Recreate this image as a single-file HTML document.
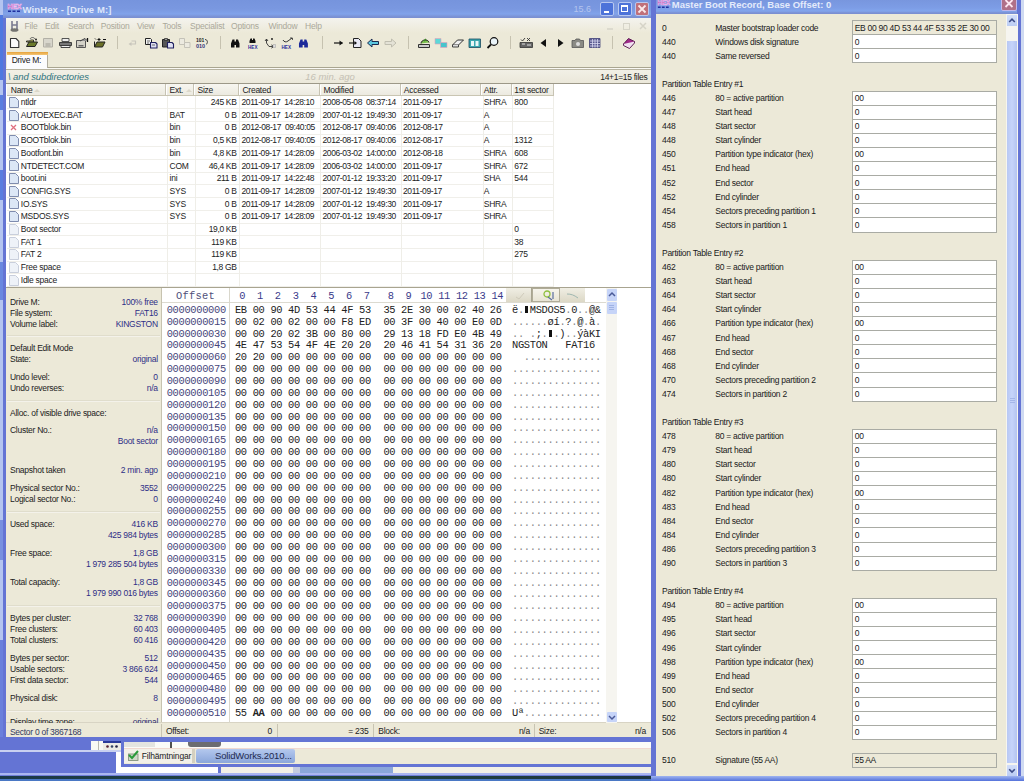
<!DOCTYPE html><html><head><meta charset="utf-8"><style>
html,body{margin:0;padding:0;}
body{width:1024px;height:781px;overflow:hidden;position:relative;background:#6a7fd6;font-family:"Liberation Sans",sans-serif;}
.t{position:absolute;white-space:pre;letter-spacing:-0.27px;}
.r{position:absolute;}
svg{position:absolute;overflow:visible;}
</style></head><body>
<div class="r" style="left:0px;top:0px;width:3px;height:741px;background:#b4c4f0;"></div>
<div class="r" style="left:0px;top:15px;width:3px;height:65px;background:#4f78e0;"></div>
<div class="r" style="left:0px;top:95px;width:3px;height:15px;background:#5a7ee0;"></div>
<div class="r" style="left:0px;top:170px;width:3px;height:30px;background:#5a7ee0;"></div>
<div class="r" style="left:0px;top:262px;width:3px;height:38px;background:#6a88e0;"></div>
<div class="r" style="left:0px;top:520px;width:3px;height:40px;background:#7890e0;"></div>
<div class="r" style="left:0px;top:640px;width:3px;height:101px;background:#6a80dc;"></div>
<div class="r" style="left:3px;top:0px;width:653px;height:741px;background:#6474d4;"></div>
<div class="r" style="left:3px;top:0px;width:648px;height:18px;background:linear-gradient(#7694dd 0px,#7a98e0 9px,#81a3ea 14px,#7a90d2 17px,#7a90d2 18px);"></div>
<div class="r" style="left:6px;top:18px;width:645px;height:15px;background:linear-gradient(#f4f3ee,#ece9d8);"></div>
<div class="r" style="left:6px;top:33px;width:645px;height:18px;background:#ece9d8;"></div>
<div class="r" style="left:48px;top:51px;width:603px;height:1px;background:#c2beaa;"></div>
<div class="r" style="left:6px;top:51px;width:645px;height:19px;background:#ece9d8;"></div>
<div class="r" style="left:48px;top:67px;width:603px;height:1px;background:#a9a590;"></div>
<div class="r" style="left:6px;top:68px;width:645px;height:1px;background:#faf9f4;"></div>
<div class="r" style="left:6px;top:69px;width:645px;height:1px;background:#b7b3a0;"></div>
<div class="r" style="left:7px;top:52px;width:41px;height:17px;background:#fcfcfe;"></div>
<div class="r" style="left:7px;top:52px;width:41px;height:3px;background:linear-gradient(#e6a23a,#f3c576);"></div>
<div class="r" style="left:47px;top:55px;width:1px;height:13px;background:#b0aca0;"></div>
<div class="r" style="left:6px;top:70px;width:645px;height:13px;background:linear-gradient(#f2f0e6,#ebe8da);"></div>
<div class="r" style="left:6px;top:83px;width:645px;height:1px;background:#9c9888;"></div>
<div class="r" style="left:6px;top:84px;width:645px;height:203px;background:#ffffff;"></div>
<div class="r" style="left:6px;top:287px;width:645px;height:1px;background:#a8a490;"></div>
<div class="r" style="left:7px;top:84px;width:547px;height:12px;background:linear-gradient(#f7f6f0,#ebe9df);"></div>
<div class="r" style="left:7px;top:95px;width:547px;height:1px;background:#c9c5b2;"></div>
<div class="r" style="left:6px;top:288px;width:156px;height:435px;background:#ece9d8;"></div>
<div class="r" style="left:161px;top:288px;width:1px;height:435px;background:#c7c3b0;"></div>
<div class="r" style="left:162px;top:288px;width:489px;height:435px;background:#ffffff;"></div>
<div class="r" style="left:6px;top:723px;width:645px;height:14px;background:#ece9d8;"></div>
<div class="r" style="left:6px;top:722px;width:645px;height:1px;background:#d8d4c4;"></div>
<svg style="left:6.8px;top:1.8px" width="14.0" height="11.0" viewBox="0 0 14 11"><text x="0.3" y="6.8" font-family="Liberation Sans" font-weight="bold" font-size="7.2" fill="#b02898" stroke="#f0c0f0" stroke-width="0.6" letter-spacing="-0.3">HEX</text><path d="M1 9.2h3M5.5 9.2h3M10 9.2h3" stroke="#2030a0" stroke-width="1.6"/></svg>
<div class="t" style="top:4.41px;font-size:9.5px;line-height:12px;color:#dfe7fa;letter-spacing:0.1px;font-weight:bold;left:22.60px;">WinHex - [Drive M:]</div>
<div class="t" style="top:3.38px;font-size:9px;line-height:12px;color:#b4c4ee;letter-spacing:0px;right:433.00px;text-align:right;">15.6</div>
<div class="r" style="left:600px;top:2px;width:14px;height:14px;box-sizing:border-box;border:1px solid #b8c8f0;border-radius:2px;background:#4d73d9;"></div>
<div class="r" style="left:617.5px;top:2px;width:14px;height:14px;box-sizing:border-box;border:1px solid #b8c8f0;border-radius:2px;background:#4d73d9;"></div>
<div class="r" style="left:635px;top:2px;width:14px;height:14px;box-sizing:border-box;border:1px solid #b8c8f0;border-radius:2px;background:#c0707a;"></div>
<div class="r" style="left:604px;top:11px;width:5px;height:2px;background:#ffffff;"></div>
<div class="r" style="left:621px;top:5px;width:7px;height:7px;box-sizing:border-box;border:1px solid #fff;border-top-width:2px;"></div>
<svg style="left:635px;top:2px" width="14" height="14"><path d="M3.5 3.5L10.5 10.5M10.5 3.5L3.5 10.5" stroke="#fbe8ea" stroke-width="1.8"/></svg>
<div class="t" style="top:20.05px;font-size:8.5px;line-height:12px;color:#aaa89a;letter-spacing:-0.2px;left:24.60px;">File</div>
<div class="t" style="top:20.05px;font-size:8.5px;line-height:12px;color:#aaa89a;letter-spacing:-0.2px;left:45.00px;">Edit</div>
<div class="t" style="top:20.05px;font-size:8.5px;line-height:12px;color:#aaa89a;letter-spacing:-0.2px;left:68.00px;">Search</div>
<div class="t" style="top:20.05px;font-size:8.5px;line-height:12px;color:#aaa89a;letter-spacing:-0.2px;left:100.80px;">Position</div>
<div class="t" style="top:20.05px;font-size:8.5px;line-height:12px;color:#aaa89a;letter-spacing:-0.2px;left:137.00px;">View</div>
<div class="t" style="top:20.05px;font-size:8.5px;line-height:12px;color:#aaa89a;letter-spacing:-0.2px;left:162.50px;">Tools</div>
<div class="t" style="top:20.05px;font-size:8.5px;line-height:12px;color:#aaa89a;letter-spacing:-0.2px;left:190.00px;">Specialist</div>
<div class="t" style="top:20.05px;font-size:8.5px;line-height:12px;color:#aaa89a;letter-spacing:-0.2px;left:231.00px;">Options</div>
<div class="t" style="top:20.05px;font-size:8.5px;line-height:12px;color:#aaa89a;letter-spacing:-0.2px;left:268.50px;">Window</div>
<div class="t" style="top:20.05px;font-size:8.5px;line-height:12px;color:#aaa89a;letter-spacing:-0.2px;left:305.00px;">Help</div>
<svg style="left:605px;top:20px" width="50" height="12"><path d="M2 9h6" stroke="#d6d4c8" stroke-width="1.5"/><rect x="18.5" y="3.5" width="6" height="6" fill="none" stroke="#d6d4c8"/><path d="M35 3l6 6M41 3l-6 6" stroke="#d6d4c8" stroke-width="1.5"/></svg>
<svg style="left:0px;top:0px" width="660" height="60" viewBox="0 0 660 60">
<g stroke-linejoin="round">
<!-- menu H icon -->
<path d="M12 21v8M17 21v8M12 25h5" stroke="#7a7a90" stroke-width="1.6"/>
<ellipse cx="14.5" cy="30" rx="4" ry="1.8" fill="#555" opacity="0.8"/>
<!-- 1 new -->
<path d="M10.5 38.5h5.5l2.8 2.8v6.2h-8.3z" fill="#fbfbfb" stroke="#333" stroke-width="1.1"/>
<!-- 2 open -->
<path d="M26.5 41h3l1 -1h3v2h-7z" fill="#d8d870" stroke="#222" stroke-width="0.9"/>
<path d="M26.5 46.5l2.5-4.5h8.5l-2.5 4.5z" fill="#6b7a2a" stroke="#222" stroke-width="1"/>
<path d="M30 39c1-2 4-2 5 0" stroke="#444" fill="none" stroke-width="0.8"/><circle cx="36" cy="39.5" r="0.9" fill="#111"/>
<!-- 3 save gray -->
<rect x="43.5" y="38.5" width="9" height="8.5" fill="#d8d6cc" stroke="#b2b0a6" stroke-width="1"/>
<rect x="45.5" y="43" width="5" height="4" fill="#bcbab0"/>
<!-- 4 print -->
<rect x="62" y="38.5" width="7" height="3" fill="#eee" stroke="#444" stroke-width="0.9"/>
<path d="M59.5 42.5h12v3h-12z" fill="#777" stroke="#333" stroke-width="0.9"/>
<rect x="61" y="45.5" width="9" height="2" fill="#eee" stroke="#333" stroke-width="0.9"/>
<!-- 5 -->
<rect x="76.5" y="40.5" width="9" height="7" fill="#d4d2c8" stroke="#555" stroke-width="1"/>
<path d="M80 41l5 -2.5l2 2" stroke="#333" fill="#aaa" stroke-width="0.9"/><path d="M87.5 38v4" stroke="#111" stroke-width="1.3"/>
<rect x="78.5" y="45" width="5" height="1.5" fill="#666"/>
<!-- 6 folder star -->
<path d="M94.5 47l2.5-5h8l-2.5 5z" fill="#6b7028" stroke="#222" stroke-width="1"/>
<path d="M94.5 41.5v5.5" stroke="#222" stroke-width="1"/>
<path d="M95 38.5l1 1M99 38v3M97.5 39.5h3M103 39.5h3" stroke="#111" stroke-width="1"/>
<!-- sep -->
<path d="M117.5 36v13" stroke="#c6c2b0" stroke-width="1"/>
<!-- 7 undo gray -->
<path d="M130 44h5.5v-3h-4" stroke="#c8c6bc" fill="none" stroke-width="1.2"/><path d="M128.5 44l3-2v4z" fill="#c8c6bc"/>
<!-- 8 copy -->
<path d="M145.5 38.5h5l1 1v5h-6z" fill="#f2f2f2" stroke="#222" stroke-width="1"/>
<path d="M150.5 42.5h5l1.5 1.5v4h-6.5z" fill="#dfe0f2" stroke="#202060" stroke-width="1.1"/>
<path d="M147 41h3M147 43h2M152 45h3" stroke="#333" stroke-width="0.7"/>
<!-- 9 paste -->
<rect x="162.5" y="39.5" width="7" height="7.5" fill="#555" stroke="#222" stroke-width="1"/>
<rect x="164.5" y="38.5" width="3" height="2" fill="#999" stroke="#222" stroke-width="0.7"/>
<path d="M167.5 42.5h4.5l1.5 1.5v4h-6z" fill="#dfe0f2" stroke="#202060" stroke-width="1.1"/>
<!-- 10 gray copy -->
<path d="M179.5 38.5h5v6h-5z" fill="#eceae0" stroke="#c4c2b8" stroke-width="1"/>
<path d="M184.5 42.5h5.5v5h-5.5z" fill="#eceae0" stroke="#c4c2b8" stroke-width="1"/>
<!-- 11 101/010 -->
<text x="196" y="42" font-family="Liberation Sans" font-size="5" font-weight="bold" fill="#222">101</text>
<text x="196" y="48" font-family="Liberation Sans" font-size="5.5" font-weight="bold" fill="#33337a">010</text>
<path d="M205 39.5c3 0 3 4 1 5" stroke="#333" fill="none" stroke-width="0.9"/>
<!-- sep -->
<path d="M220.5 36v13" stroke="#c6c2b0" stroke-width="1"/>
<!-- 12 binoculars black -->
<path d="M231 47.5v-4l1.5-4h2v2h1.5v-2h2l1.5 4v4h-3.5v-2.5h-1.5v2.5z" fill="#111"/>
<!-- 13 binoc HEX -->
<path d="M249.5 43v-2l1-2.5h1.5v1.5h1v-1.5h1.5l1 2.5v2z" fill="#111"/>
<text x="248" y="48.5" font-family="Liberation Sans" font-size="4.6" font-weight="bold" fill="#2a2a9a">HEX</text>
<!-- 14 replace -->
<path d="M265 41l1.5-2l1.5 2M266.5 39v4l2.5 3.5h4" stroke="#333" fill="none" stroke-width="0.9"/>
<circle cx="272" cy="39" r="0.9" fill="#111"/><path d="M271.5 45l2 1.5-2 1.5" stroke="#111" fill="none" stroke-width="1"/>
<rect x="273" y="44.5" width="2.5" height="3" fill="#ddd" stroke="#aaa" stroke-width="0.6"/>
<!-- 15 replace HEX -->
<path d="M283 40c1 2 3 2.5 5 1M288 41l4-3" stroke="#333" fill="none" stroke-width="1"/>
<path d="M290 38l2.5 0v2" stroke="#333" fill="none" stroke-width="0.8"/>
<text x="281.5" y="48.5" font-family="Liberation Sans" font-size="4.6" font-weight="bold" fill="#2a2a9a">HEX</text>
<!-- 16 blue binoculars -->
<path d="M299 47.5v-4l1.5-4h2v2h1.5v-2h2l1.5 4v4h-3.5v-2.5h-1.5v2.5z" fill="#1c2a9a" transform="translate(299.5 0) scale(1.05 1) translate(-299.5 0)"/>
<!-- sep -->
<path d="M322.5 36v13" stroke="#c6c2b0" stroke-width="1"/>
<!-- 17 arrow -->
<path d="M334 43h8.5" stroke="#111" stroke-width="1.2"/><path d="M339.5 40.5l3.5 2.5-3.5 2.5z" fill="#111"/>
<!-- 18 arrow into doc -->
<path d="M353.5 38.5h5l2.5 2.5v6.5h-7.5z" fill="#e8e8f4" stroke="#222" stroke-width="1"/>
<path d="M349 43h7" stroke="#111" stroke-width="1.1"/><path d="M354.5 41l2.5 2-2.5 2z" fill="#111"/>
<!-- 19 cyan back -->
<path d="M367.5 43l4.5-4v2.5h6.5v3h-6.5v2.5z" fill="#5cc8e0" stroke="#1a2a50" stroke-width="1"/>
<!-- 20 gray fwd -->
<path d="M396 43l-4.5-4v2.5h-6.5v3h6.5v2.5z" fill="#e4e2d6" stroke="#c0beb0" stroke-width="1"/>
<!-- sep -->
<path d="M408.5 36v13" stroke="#c6c2b0" stroke-width="1"/>
<!-- 21 disk green -->
<path d="M418.5 44.5h11v3h-11z" fill="#ccc" stroke="#333" stroke-width="1"/>
<path d="M421 43.5c0-4 7-5 8-1" stroke="#222" fill="#7cc050" stroke-width="1"/>
<path d="M424 41l2-2" stroke="#3a8a20" stroke-width="1.3"/>
<!-- 22 cyan squares -->
<rect x="435" y="38.5" width="6" height="5.5" fill="#5cd8d8" stroke="#e8a0b8" stroke-width="0.6"/>
<rect x="440.5" y="42.5" width="6.5" height="5" fill="#46c4cc" stroke="#e8a0b8" stroke-width="0.6"/>
<!-- 23 tape -->
<path d="M452.5 45l5-5h6l-5 5z" fill="#f0f0f0" stroke="#333" stroke-width="1"/><path d="M452.5 45v2h6v-2" fill="#ddd" stroke="#333" stroke-width="0.9"/>
<!-- 24 teal calc -->
<rect x="469" y="39" width="11.5" height="8.5" fill="#3aa8b0" stroke="#1a4a60" stroke-width="0.8"/>
<rect x="471" y="41" width="3" height="5" fill="#e8f8f8"/><rect x="475.5" y="41" width="3" height="5" fill="#e8f8f8"/>
<!-- 25 magnifier -->
<circle cx="494" cy="41.5" r="3.8" fill="#eaf4f8" stroke="#111" stroke-width="1.2"/><path d="M491 44.5l-3.5 3.5" stroke="#111" stroke-width="1.8"/>
<!-- sep -->
<path d="M510.5 36v13" stroke="#c6c2b0" stroke-width="1"/>
<!-- 26 check/x table -->
<path d="M521 39.5l1.5 1.5 2.5-3M527 38l3 3M530 38l-3 3" stroke="#333" fill="none" stroke-width="0.9"/>
<rect x="520" y="42.5" width="12.5" height="5" fill="#666" stroke="#333" stroke-width="0.8"/><path d="M522 44h3M527 45h4" stroke="#eee" stroke-width="0.9"/>
<!-- 27/28 triangles -->
<path d="M546 39v8l-5.5-4z" fill="#111"/>
<path d="M558 39v8l5.5-4z" fill="#111"/>
<!-- 29 camera -->
<path d="M572 40.5h3l1-1.5h3.5l1 1.5h3v7h-11.5z" fill="#8a8a84" stroke="#555" stroke-width="0.8"/>
<circle cx="578" cy="44" r="2" fill="#ddd"/>
<!-- 30 grid -->
<rect x="589.5" y="38.5" width="10.5" height="9" fill="#5a5a90" stroke="#44447a" stroke-width="0.8"/>
<path d="M592.5 39v8.5M595 39v8.5M597.5 39v8.5M590 41h10M590 43.5h10M590 46h10" stroke="#d8d8f0" stroke-width="0.8"/>
<!-- sep -->
<path d="M612.5 36v13" stroke="#c6c2b0" stroke-width="1"/>
<!-- 31 book -->
<path d="M623.5 44l5-5.5 6 3-5 5.5z" fill="#a02a8a" stroke="#501048" stroke-width="0.9"/>
<path d="M623.5 44v1.5l6 3 5-5.5v-1.5" fill="#f0e0f0" stroke="#501048" stroke-width="0.9"/>
</g>
</svg>
<div class="t" style="top:54.35px;font-size:8.5px;line-height:12px;color:#222;left:11.70px;">Drive M:</div>
<div class="t" style="top:71.11px;font-size:9.5px;line-height:12px;color:#2f7480;letter-spacing:-0.1px;font-style:italic;left:8.00px;">\ and subdirectories</div>
<div class="t" style="top:71.11px;font-size:9.5px;line-height:12px;color:#c4c0b4;letter-spacing:0px;font-style:italic;left:305.20px;">16 min. ago</div>
<div class="t" style="top:70.75px;font-size:8.5px;line-height:12px;color:#222;letter-spacing:-0.3px;right:376.60px;text-align:right;">14+1=15 files</div>
<div class="r" style="left:165px;top:84px;width:1px;height:12px;background:#c7c3b3;"></div>
<div class="r" style="left:166px;top:85px;width:1px;height:10px;background:#ffffff;"></div>
<div class="r" style="left:193px;top:84px;width:1px;height:12px;background:#c7c3b3;"></div>
<div class="r" style="left:194px;top:85px;width:1px;height:10px;background:#ffffff;"></div>
<div class="r" style="left:238px;top:84px;width:1px;height:12px;background:#c7c3b3;"></div>
<div class="r" style="left:239px;top:85px;width:1px;height:10px;background:#ffffff;"></div>
<div class="r" style="left:319px;top:84px;width:1px;height:12px;background:#c7c3b3;"></div>
<div class="r" style="left:320px;top:85px;width:1px;height:10px;background:#ffffff;"></div>
<div class="r" style="left:400px;top:84px;width:1px;height:12px;background:#c7c3b3;"></div>
<div class="r" style="left:401px;top:85px;width:1px;height:10px;background:#ffffff;"></div>
<div class="r" style="left:480px;top:84px;width:1px;height:12px;background:#c7c3b3;"></div>
<div class="r" style="left:481px;top:85px;width:1px;height:10px;background:#ffffff;"></div>
<div class="r" style="left:511px;top:84px;width:1px;height:12px;background:#c7c3b3;"></div>
<div class="r" style="left:512px;top:85px;width:1px;height:10px;background:#ffffff;"></div>
<div class="r" style="left:553px;top:84px;width:1px;height:12px;background:#c7c3b3;"></div>
<div class="r" style="left:554px;top:85px;width:1px;height:10px;background:#ffffff;"></div>
<div class="t" style="top:84.35px;font-size:8.5px;line-height:12px;color:#222;left:10.80px;">Name</div>
<div class="t" style="top:84.35px;font-size:8.5px;line-height:12px;color:#222;left:169.60px;">Ext.</div>
<div class="t" style="top:84.35px;font-size:8.5px;line-height:12px;color:#222;left:197.60px;">Size</div>
<div class="t" style="top:84.35px;font-size:8.5px;line-height:12px;color:#222;left:242.50px;">Created</div>
<div class="t" style="top:84.35px;font-size:8.5px;line-height:12px;color:#222;left:323.40px;">Modified</div>
<div class="t" style="top:84.35px;font-size:8.5px;line-height:12px;color:#222;left:403.80px;">Accessed</div>
<div class="t" style="top:84.35px;font-size:8.5px;line-height:12px;color:#222;left:483.80px;">Attr.</div>
<div class="t" style="top:84.35px;font-size:8.5px;line-height:12px;color:#222;left:514.30px;">1st sector</div>
<svg style="left:34px;top:89px" width="6" height="4"><path d="M0 3L3 0L6 3" fill="#dcd8ca"/></svg>
<svg style="left:186px;top:89px" width="6" height="4"><path d="M0 3L3 0L6 3" fill="#dcd8ca"/></svg>
<div class="r" style="left:7px;top:108px;width:547px;height:1px;background:#f0efea;"></div>
<div class="r" style="left:7px;top:121px;width:547px;height:1px;background:#f0efea;"></div>
<div class="r" style="left:7px;top:134px;width:547px;height:1px;background:#f0efea;"></div>
<div class="r" style="left:7px;top:146px;width:547px;height:1px;background:#f0efea;"></div>
<div class="r" style="left:7px;top:159px;width:547px;height:1px;background:#f0efea;"></div>
<div class="r" style="left:7px;top:172px;width:547px;height:1px;background:#f0efea;"></div>
<div class="r" style="left:7px;top:184px;width:547px;height:1px;background:#f0efea;"></div>
<div class="r" style="left:7px;top:197px;width:547px;height:1px;background:#f0efea;"></div>
<div class="r" style="left:7px;top:210px;width:547px;height:1px;background:#f0efea;"></div>
<div class="r" style="left:7px;top:223px;width:547px;height:1px;background:#f0efea;"></div>
<div class="r" style="left:7px;top:235px;width:547px;height:1px;background:#f0efea;"></div>
<div class="r" style="left:7px;top:248px;width:547px;height:1px;background:#f0efea;"></div>
<div class="r" style="left:7px;top:261px;width:547px;height:1px;background:#f0efea;"></div>
<div class="r" style="left:7px;top:273px;width:547px;height:1px;background:#f0efea;"></div>
<div class="r" style="left:7px;top:286px;width:547px;height:1px;background:#f0efea;"></div>
<div class="r" style="left:167px;top:96px;width:1px;height:191px;background:#efeee8;"></div>
<div class="r" style="left:195px;top:96px;width:1px;height:191px;background:#efeee8;"></div>
<div class="r" style="left:239px;top:96px;width:1px;height:191px;background:#efeee8;"></div>
<div class="r" style="left:320px;top:96px;width:1px;height:191px;background:#efeee8;"></div>
<div class="r" style="left:401px;top:96px;width:1px;height:191px;background:#efeee8;"></div>
<div class="r" style="left:483px;top:96px;width:1px;height:191px;background:#efeee8;"></div>
<div class="r" style="left:512px;top:96px;width:1px;height:191px;background:#efeee8;"></div>
<div class="r" style="left:553px;top:96px;width:1px;height:191px;background:#efeee8;"></div>
<svg style="left:8.5px;top:96.8px" width="10" height="11"><path d="M0.5 0.5H6.5L9.5 3.5V10.5H0.5Z" fill="#dce7f6" stroke="#7f8cae"/></svg>
<div class="t" style="top:96.05px;font-size:8.5px;line-height:12px;color:#222;left:20.80px;">ntldr</div>
<div class="t" style="top:96.05px;font-size:8.5px;line-height:12px;color:#222;left:169.60px;"></div>
<div class="t" style="top:96.05px;font-size:8.5px;line-height:12px;color:#222;letter-spacing:-0.35px;right:787.50px;text-align:right;">245 KB</div>
<div class="t" style="top:96.05px;font-size:8.5px;line-height:12px;color:#222;letter-spacing:-0.4px;left:241.50px;">2011-09-17  14:28:10</div>
<div class="t" style="top:96.05px;font-size:8.5px;line-height:12px;color:#222;letter-spacing:-0.4px;left:322.50px;">2008-05-08  08:37:14</div>
<div class="t" style="top:96.05px;font-size:8.5px;line-height:12px;color:#222;letter-spacing:-0.4px;left:403.00px;">2011-09-17</div>
<div class="t" style="top:96.05px;font-size:8.5px;line-height:12px;color:#222;left:483.80px;">SHRA</div>
<div class="t" style="top:96.05px;font-size:8.5px;line-height:12px;color:#222;left:514.30px;">800</div>
<svg style="left:8.5px;top:109.5px" width="10" height="11"><path d="M0.5 0.5H6.5L9.5 3.5V10.5H0.5Z" fill="#dce7f6" stroke="#7f8cae"/></svg>
<div class="t" style="top:108.75px;font-size:8.5px;line-height:12px;color:#222;left:20.80px;">AUTOEXEC.BAT</div>
<div class="t" style="top:108.75px;font-size:8.5px;line-height:12px;color:#222;left:169.60px;">BAT</div>
<div class="t" style="top:108.75px;font-size:8.5px;line-height:12px;color:#222;letter-spacing:-0.35px;right:787.50px;text-align:right;">0 B</div>
<div class="t" style="top:108.75px;font-size:8.5px;line-height:12px;color:#222;letter-spacing:-0.4px;left:241.50px;">2011-09-17  14:28:09</div>
<div class="t" style="top:108.75px;font-size:8.5px;line-height:12px;color:#222;letter-spacing:-0.4px;left:322.50px;">2007-01-12  19:49:30</div>
<div class="t" style="top:108.75px;font-size:8.5px;line-height:12px;color:#222;letter-spacing:-0.4px;left:403.00px;">2011-09-17</div>
<div class="t" style="top:108.75px;font-size:8.5px;line-height:12px;color:#222;left:483.80px;">A</div>
<div class="t" style="top:108.75px;font-size:8.5px;line-height:12px;color:#222;left:514.30px;"></div>
<svg style="left:8.5px;top:122.2px" width="10" height="11"><path d="M2 3l5 5M7 3l-5 5" stroke="#e07080" stroke-width="1.3"/></svg>
<div class="t" style="top:121.45px;font-size:8.5px;line-height:12px;color:#222;left:20.80px;">BOOTblok.bin</div>
<div class="t" style="top:121.45px;font-size:8.5px;line-height:12px;color:#222;left:169.60px;">bin</div>
<div class="t" style="top:121.45px;font-size:8.5px;line-height:12px;color:#222;letter-spacing:-0.35px;right:787.50px;text-align:right;">0 B</div>
<div class="t" style="top:121.45px;font-size:8.5px;line-height:12px;color:#222;letter-spacing:-0.4px;left:241.50px;">2012-08-17  09:40:05</div>
<div class="t" style="top:121.45px;font-size:8.5px;line-height:12px;color:#222;letter-spacing:-0.4px;left:322.50px;">2012-08-17  09:40:06</div>
<div class="t" style="top:121.45px;font-size:8.5px;line-height:12px;color:#222;letter-spacing:-0.4px;left:403.00px;">2012-08-17</div>
<div class="t" style="top:121.45px;font-size:8.5px;line-height:12px;color:#222;left:483.80px;">A</div>
<div class="t" style="top:121.45px;font-size:8.5px;line-height:12px;color:#222;left:514.30px;"></div>
<svg style="left:8.5px;top:134.9px" width="10" height="11"><path d="M0.5 0.5H6.5L9.5 3.5V10.5H0.5Z" fill="#dce7f6" stroke="#7f8cae"/></svg>
<div class="t" style="top:134.15px;font-size:8.5px;line-height:12px;color:#222;left:20.80px;">BOOTblok.bin</div>
<div class="t" style="top:134.15px;font-size:8.5px;line-height:12px;color:#222;left:169.60px;">bin</div>
<div class="t" style="top:134.15px;font-size:8.5px;line-height:12px;color:#222;letter-spacing:-0.35px;right:787.50px;text-align:right;">0,5 KB</div>
<div class="t" style="top:134.15px;font-size:8.5px;line-height:12px;color:#222;letter-spacing:-0.4px;left:241.50px;">2012-08-17  09:40:05</div>
<div class="t" style="top:134.15px;font-size:8.5px;line-height:12px;color:#222;letter-spacing:-0.4px;left:322.50px;">2012-08-17  09:40:06</div>
<div class="t" style="top:134.15px;font-size:8.5px;line-height:12px;color:#222;letter-spacing:-0.4px;left:403.00px;">2012-08-17</div>
<div class="t" style="top:134.15px;font-size:8.5px;line-height:12px;color:#222;left:483.80px;">A</div>
<div class="t" style="top:134.15px;font-size:8.5px;line-height:12px;color:#222;left:514.30px;">1312</div>
<svg style="left:8.5px;top:147.6px" width="10" height="11"><path d="M0.5 0.5H6.5L9.5 3.5V10.5H0.5Z" fill="#dce7f6" stroke="#7f8cae"/></svg>
<div class="t" style="top:146.85px;font-size:8.5px;line-height:12px;color:#222;left:20.80px;">Bootfont.bin</div>
<div class="t" style="top:146.85px;font-size:8.5px;line-height:12px;color:#222;left:169.60px;">bin</div>
<div class="t" style="top:146.85px;font-size:8.5px;line-height:12px;color:#222;letter-spacing:-0.35px;right:787.50px;text-align:right;">4,8 KB</div>
<div class="t" style="top:146.85px;font-size:8.5px;line-height:12px;color:#222;letter-spacing:-0.4px;left:241.50px;">2011-09-17  14:28:09</div>
<div class="t" style="top:146.85px;font-size:8.5px;line-height:12px;color:#222;letter-spacing:-0.4px;left:322.50px;">2006-03-02  14:00:00</div>
<div class="t" style="top:146.85px;font-size:8.5px;line-height:12px;color:#222;letter-spacing:-0.4px;left:403.00px;">2012-08-18</div>
<div class="t" style="top:146.85px;font-size:8.5px;line-height:12px;color:#222;left:483.80px;">SHRA</div>
<div class="t" style="top:146.85px;font-size:8.5px;line-height:12px;color:#222;left:514.30px;">608</div>
<svg style="left:8.5px;top:160.3px" width="10" height="11"><path d="M0.5 0.5H6.5L9.5 3.5V10.5H0.5Z" fill="#dce7f6" stroke="#7f8cae"/></svg>
<div class="t" style="top:159.55px;font-size:8.5px;line-height:12px;color:#222;left:20.80px;">NTDETECT.COM</div>
<div class="t" style="top:159.55px;font-size:8.5px;line-height:12px;color:#222;left:169.60px;">COM</div>
<div class="t" style="top:159.55px;font-size:8.5px;line-height:12px;color:#222;letter-spacing:-0.35px;right:787.50px;text-align:right;">46,4 KB</div>
<div class="t" style="top:159.55px;font-size:8.5px;line-height:12px;color:#222;letter-spacing:-0.4px;left:241.50px;">2011-09-17  14:28:09</div>
<div class="t" style="top:159.55px;font-size:8.5px;line-height:12px;color:#222;letter-spacing:-0.4px;left:322.50px;">2006-03-02  14:00:00</div>
<div class="t" style="top:159.55px;font-size:8.5px;line-height:12px;color:#222;letter-spacing:-0.4px;left:403.00px;">2011-09-17</div>
<div class="t" style="top:159.55px;font-size:8.5px;line-height:12px;color:#222;left:483.80px;">SHRA</div>
<div class="t" style="top:159.55px;font-size:8.5px;line-height:12px;color:#222;left:514.30px;">672</div>
<svg style="left:8.5px;top:173.0px" width="10" height="11"><path d="M0.5 0.5H6.5L9.5 3.5V10.5H0.5Z" fill="#dce7f6" stroke="#7f8cae"/></svg>
<div class="t" style="top:172.25px;font-size:8.5px;line-height:12px;color:#222;left:20.80px;">boot.ini</div>
<div class="t" style="top:172.25px;font-size:8.5px;line-height:12px;color:#222;left:169.60px;">ini</div>
<div class="t" style="top:172.25px;font-size:8.5px;line-height:12px;color:#222;letter-spacing:-0.35px;right:787.50px;text-align:right;">211 B</div>
<div class="t" style="top:172.25px;font-size:8.5px;line-height:12px;color:#222;letter-spacing:-0.4px;left:241.50px;">2011-09-17  14:22:48</div>
<div class="t" style="top:172.25px;font-size:8.5px;line-height:12px;color:#222;letter-spacing:-0.4px;left:322.50px;">2007-01-12  19:33:20</div>
<div class="t" style="top:172.25px;font-size:8.5px;line-height:12px;color:#222;letter-spacing:-0.4px;left:403.00px;">2011-09-17</div>
<div class="t" style="top:172.25px;font-size:8.5px;line-height:12px;color:#222;left:483.80px;">SHA</div>
<div class="t" style="top:172.25px;font-size:8.5px;line-height:12px;color:#222;left:514.30px;">544</div>
<svg style="left:8.5px;top:185.7px" width="10" height="11"><path d="M0.5 0.5H6.5L9.5 3.5V10.5H0.5Z" fill="#dce7f6" stroke="#7f8cae"/></svg>
<div class="t" style="top:184.95px;font-size:8.5px;line-height:12px;color:#222;left:20.80px;">CONFIG.SYS</div>
<div class="t" style="top:184.95px;font-size:8.5px;line-height:12px;color:#222;left:169.60px;">SYS</div>
<div class="t" style="top:184.95px;font-size:8.5px;line-height:12px;color:#222;letter-spacing:-0.35px;right:787.50px;text-align:right;">0 B</div>
<div class="t" style="top:184.95px;font-size:8.5px;line-height:12px;color:#222;letter-spacing:-0.4px;left:241.50px;">2011-09-17  14:28:09</div>
<div class="t" style="top:184.95px;font-size:8.5px;line-height:12px;color:#222;letter-spacing:-0.4px;left:322.50px;">2007-01-12  19:49:30</div>
<div class="t" style="top:184.95px;font-size:8.5px;line-height:12px;color:#222;letter-spacing:-0.4px;left:403.00px;">2011-09-17</div>
<div class="t" style="top:184.95px;font-size:8.5px;line-height:12px;color:#222;left:483.80px;">A</div>
<div class="t" style="top:184.95px;font-size:8.5px;line-height:12px;color:#222;left:514.30px;"></div>
<svg style="left:8.5px;top:198.4px" width="10" height="11"><path d="M0.5 0.5H6.5L9.5 3.5V10.5H0.5Z" fill="#dce7f6" stroke="#7f8cae"/></svg>
<div class="t" style="top:197.65px;font-size:8.5px;line-height:12px;color:#222;left:20.80px;">IO.SYS</div>
<div class="t" style="top:197.65px;font-size:8.5px;line-height:12px;color:#222;left:169.60px;">SYS</div>
<div class="t" style="top:197.65px;font-size:8.5px;line-height:12px;color:#222;letter-spacing:-0.35px;right:787.50px;text-align:right;">0 B</div>
<div class="t" style="top:197.65px;font-size:8.5px;line-height:12px;color:#222;letter-spacing:-0.4px;left:241.50px;">2011-09-17  14:28:09</div>
<div class="t" style="top:197.65px;font-size:8.5px;line-height:12px;color:#222;letter-spacing:-0.4px;left:322.50px;">2007-01-12  19:49:30</div>
<div class="t" style="top:197.65px;font-size:8.5px;line-height:12px;color:#222;letter-spacing:-0.4px;left:403.00px;">2011-09-17</div>
<div class="t" style="top:197.65px;font-size:8.5px;line-height:12px;color:#222;left:483.80px;">SHRA</div>
<div class="t" style="top:197.65px;font-size:8.5px;line-height:12px;color:#222;left:514.30px;"></div>
<svg style="left:8.5px;top:211.1px" width="10" height="11"><path d="M0.5 0.5H6.5L9.5 3.5V10.5H0.5Z" fill="#dce7f6" stroke="#7f8cae"/></svg>
<div class="t" style="top:210.35px;font-size:8.5px;line-height:12px;color:#222;left:20.80px;">MSDOS.SYS</div>
<div class="t" style="top:210.35px;font-size:8.5px;line-height:12px;color:#222;left:169.60px;">SYS</div>
<div class="t" style="top:210.35px;font-size:8.5px;line-height:12px;color:#222;letter-spacing:-0.35px;right:787.50px;text-align:right;">0 B</div>
<div class="t" style="top:210.35px;font-size:8.5px;line-height:12px;color:#222;letter-spacing:-0.4px;left:241.50px;">2011-09-17  14:28:09</div>
<div class="t" style="top:210.35px;font-size:8.5px;line-height:12px;color:#222;letter-spacing:-0.4px;left:322.50px;">2007-01-12  19:49:30</div>
<div class="t" style="top:210.35px;font-size:8.5px;line-height:12px;color:#222;letter-spacing:-0.4px;left:403.00px;">2011-09-17</div>
<div class="t" style="top:210.35px;font-size:8.5px;line-height:12px;color:#222;left:483.80px;">SHRA</div>
<div class="t" style="top:210.35px;font-size:8.5px;line-height:12px;color:#222;left:514.30px;"></div>
<svg style="left:8.5px;top:223.8px" width="10" height="11"><path d="M0.5 0.5H6.5L9.5 3.5V10.5H0.5Z" fill="#eef2f8" stroke="#c9cfdc"/></svg>
<div class="t" style="top:223.05px;font-size:8.5px;line-height:12px;color:#222;left:20.80px;">Boot sector</div>
<div class="t" style="top:223.05px;font-size:8.5px;line-height:12px;color:#222;left:169.60px;"></div>
<div class="t" style="top:223.05px;font-size:8.5px;line-height:12px;color:#222;letter-spacing:-0.35px;right:787.50px;text-align:right;">19,0 KB</div>
<div class="t" style="top:223.05px;font-size:8.5px;line-height:12px;color:#222;letter-spacing:-0.4px;left:241.50px;"></div>
<div class="t" style="top:223.05px;font-size:8.5px;line-height:12px;color:#222;letter-spacing:-0.4px;left:322.50px;"></div>
<div class="t" style="top:223.05px;font-size:8.5px;line-height:12px;color:#222;letter-spacing:-0.4px;left:403.00px;"></div>
<div class="t" style="top:223.05px;font-size:8.5px;line-height:12px;color:#222;left:483.80px;"></div>
<div class="t" style="top:223.05px;font-size:8.5px;line-height:12px;color:#222;left:514.30px;">0</div>
<svg style="left:8.5px;top:236.5px" width="10" height="11"><path d="M0.5 0.5H6.5L9.5 3.5V10.5H0.5Z" fill="#eef2f8" stroke="#c9cfdc"/></svg>
<div class="t" style="top:235.75px;font-size:8.5px;line-height:12px;color:#222;left:20.80px;">FAT 1</div>
<div class="t" style="top:235.75px;font-size:8.5px;line-height:12px;color:#222;left:169.60px;"></div>
<div class="t" style="top:235.75px;font-size:8.5px;line-height:12px;color:#222;letter-spacing:-0.35px;right:787.50px;text-align:right;">119 KB</div>
<div class="t" style="top:235.75px;font-size:8.5px;line-height:12px;color:#222;letter-spacing:-0.4px;left:241.50px;"></div>
<div class="t" style="top:235.75px;font-size:8.5px;line-height:12px;color:#222;letter-spacing:-0.4px;left:322.50px;"></div>
<div class="t" style="top:235.75px;font-size:8.5px;line-height:12px;color:#222;letter-spacing:-0.4px;left:403.00px;"></div>
<div class="t" style="top:235.75px;font-size:8.5px;line-height:12px;color:#222;left:483.80px;"></div>
<div class="t" style="top:235.75px;font-size:8.5px;line-height:12px;color:#222;left:514.30px;">38</div>
<svg style="left:8.5px;top:249.2px" width="10" height="11"><path d="M0.5 0.5H6.5L9.5 3.5V10.5H0.5Z" fill="#eef2f8" stroke="#c9cfdc"/></svg>
<div class="t" style="top:248.45px;font-size:8.5px;line-height:12px;color:#222;left:20.80px;">FAT 2</div>
<div class="t" style="top:248.45px;font-size:8.5px;line-height:12px;color:#222;left:169.60px;"></div>
<div class="t" style="top:248.45px;font-size:8.5px;line-height:12px;color:#222;letter-spacing:-0.35px;right:787.50px;text-align:right;">119 KB</div>
<div class="t" style="top:248.45px;font-size:8.5px;line-height:12px;color:#222;letter-spacing:-0.4px;left:241.50px;"></div>
<div class="t" style="top:248.45px;font-size:8.5px;line-height:12px;color:#222;letter-spacing:-0.4px;left:322.50px;"></div>
<div class="t" style="top:248.45px;font-size:8.5px;line-height:12px;color:#222;letter-spacing:-0.4px;left:403.00px;"></div>
<div class="t" style="top:248.45px;font-size:8.5px;line-height:12px;color:#222;left:483.80px;"></div>
<div class="t" style="top:248.45px;font-size:8.5px;line-height:12px;color:#222;left:514.30px;">275</div>
<svg style="left:8.5px;top:261.9px" width="10" height="11"><path d="M0.5 0.5H6.5L9.5 3.5V10.5H0.5Z" fill="#eef2f8" stroke="#c9cfdc"/></svg>
<div class="t" style="top:261.15px;font-size:8.5px;line-height:12px;color:#222;left:20.80px;">Free space</div>
<div class="t" style="top:261.15px;font-size:8.5px;line-height:12px;color:#222;left:169.60px;"></div>
<div class="t" style="top:261.15px;font-size:8.5px;line-height:12px;color:#222;letter-spacing:-0.35px;right:787.50px;text-align:right;">1,8 GB</div>
<div class="t" style="top:261.15px;font-size:8.5px;line-height:12px;color:#222;letter-spacing:-0.4px;left:241.50px;"></div>
<div class="t" style="top:261.15px;font-size:8.5px;line-height:12px;color:#222;letter-spacing:-0.4px;left:322.50px;"></div>
<div class="t" style="top:261.15px;font-size:8.5px;line-height:12px;color:#222;letter-spacing:-0.4px;left:403.00px;"></div>
<div class="t" style="top:261.15px;font-size:8.5px;line-height:12px;color:#222;left:483.80px;"></div>
<div class="t" style="top:261.15px;font-size:8.5px;line-height:12px;color:#222;left:514.30px;"></div>
<svg style="left:8.5px;top:274.6px" width="10" height="11"><path d="M0.5 0.5H6.5L9.5 3.5V10.5H0.5Z" fill="#eef2f8" stroke="#c9cfdc"/></svg>
<div class="t" style="top:273.85px;font-size:8.5px;line-height:12px;color:#222;left:20.80px;">Idle space</div>
<div class="t" style="top:273.85px;font-size:8.5px;line-height:12px;color:#222;left:169.60px;"></div>
<div class="t" style="top:273.85px;font-size:8.5px;line-height:12px;color:#222;letter-spacing:-0.35px;right:787.50px;text-align:right;"></div>
<div class="t" style="top:273.85px;font-size:8.5px;line-height:12px;color:#222;letter-spacing:-0.4px;left:241.50px;"></div>
<div class="t" style="top:273.85px;font-size:8.5px;line-height:12px;color:#222;letter-spacing:-0.4px;left:322.50px;"></div>
<div class="t" style="top:273.85px;font-size:8.5px;line-height:12px;color:#222;letter-spacing:-0.4px;left:403.00px;"></div>
<div class="t" style="top:273.85px;font-size:8.5px;line-height:12px;color:#222;left:483.80px;"></div>
<div class="t" style="top:273.85px;font-size:8.5px;line-height:12px;color:#222;left:514.30px;"></div>
<div class="t" style="top:295.65px;font-size:8.5px;line-height:12px;color:#222;left:10.00px;">Drive M:</div>
<div class="t" style="top:295.65px;font-size:8.5px;line-height:12px;color:#2e2e86;right:866.20px;text-align:right;">100% free</div>
<div class="t" style="top:306.55px;font-size:8.5px;line-height:12px;color:#222;left:10.00px;">File system:</div>
<div class="t" style="top:306.55px;font-size:8.5px;line-height:12px;color:#2e2e86;right:866.20px;text-align:right;">FAT16</div>
<div class="t" style="top:317.75px;font-size:8.5px;line-height:12px;color:#222;left:10.00px;">Volume label:</div>
<div class="t" style="top:317.75px;font-size:8.5px;line-height:12px;color:#2e2e86;right:866.20px;text-align:right;">KINGSTON</div>
<div class="t" style="top:341.75px;font-size:8.5px;line-height:12px;color:#222;left:10.00px;">Default Edit Mode</div>
<div class="t" style="top:353.05px;font-size:8.5px;line-height:12px;color:#222;left:10.00px;">State:</div>
<div class="t" style="top:353.05px;font-size:8.5px;line-height:12px;color:#2e2e86;right:866.20px;text-align:right;">original</div>
<div class="t" style="top:370.85px;font-size:8.5px;line-height:12px;color:#222;left:10.00px;">Undo level:</div>
<div class="t" style="top:370.85px;font-size:8.5px;line-height:12px;color:#2e2e86;right:866.20px;text-align:right;">0</div>
<div class="t" style="top:381.95px;font-size:8.5px;line-height:12px;color:#222;left:10.00px;">Undo reverses:</div>
<div class="t" style="top:381.95px;font-size:8.5px;line-height:12px;color:#2e2e86;right:866.20px;text-align:right;">n/a</div>
<div class="t" style="top:406.55px;font-size:8.5px;line-height:12px;color:#222;left:10.00px;">Alloc. of visible drive space:</div>
<div class="t" style="top:424.05px;font-size:8.5px;line-height:12px;color:#222;left:10.00px;">Cluster No.:</div>
<div class="t" style="top:424.05px;font-size:8.5px;line-height:12px;color:#2e2e86;right:866.20px;text-align:right;">n/a</div>
<div class="t" style="top:435.05px;font-size:8.5px;line-height:12px;color:#2e2e86;right:866.20px;text-align:right;">Boot sector</div>
<div class="t" style="top:464.05px;font-size:8.5px;line-height:12px;color:#222;left:10.00px;">Snapshot taken</div>
<div class="t" style="top:464.05px;font-size:8.5px;line-height:12px;color:#2e2e86;right:866.20px;text-align:right;">2 min. ago</div>
<div class="t" style="top:482.05px;font-size:8.5px;line-height:12px;color:#222;left:10.00px;">Physical sector No.:</div>
<div class="t" style="top:482.05px;font-size:8.5px;line-height:12px;color:#2e2e86;right:866.20px;text-align:right;">3552</div>
<div class="t" style="top:493.05px;font-size:8.5px;line-height:12px;color:#222;left:10.00px;">Logical sector No.:</div>
<div class="t" style="top:493.05px;font-size:8.5px;line-height:12px;color:#2e2e86;right:866.20px;text-align:right;">0</div>
<div class="t" style="top:517.65px;font-size:8.5px;line-height:12px;color:#222;left:10.00px;">Used space:</div>
<div class="t" style="top:517.65px;font-size:8.5px;line-height:12px;color:#2e2e86;right:866.20px;text-align:right;">416 KB</div>
<div class="t" style="top:528.85px;font-size:8.5px;line-height:12px;color:#2e2e86;right:866.20px;text-align:right;">425 984 bytes</div>
<div class="t" style="top:546.65px;font-size:8.5px;line-height:12px;color:#222;left:10.00px;">Free space:</div>
<div class="t" style="top:546.65px;font-size:8.5px;line-height:12px;color:#2e2e86;right:866.20px;text-align:right;">1,8 GB</div>
<div class="t" style="top:557.75px;font-size:8.5px;line-height:12px;color:#2e2e86;right:866.20px;text-align:right;">1 979 285 504 bytes</div>
<div class="t" style="top:575.75px;font-size:8.5px;line-height:12px;color:#222;left:10.00px;">Total capacity:</div>
<div class="t" style="top:575.75px;font-size:8.5px;line-height:12px;color:#2e2e86;right:866.20px;text-align:right;">1,8 GB</div>
<div class="t" style="top:587.05px;font-size:8.5px;line-height:12px;color:#2e2e86;right:866.20px;text-align:right;">1 979 990 016 bytes</div>
<div class="t" style="top:611.65px;font-size:8.5px;line-height:12px;color:#222;left:10.00px;">Bytes per cluster:</div>
<div class="t" style="top:611.65px;font-size:8.5px;line-height:12px;color:#2e2e86;right:866.20px;text-align:right;">32 768</div>
<div class="t" style="top:622.75px;font-size:8.5px;line-height:12px;color:#222;left:10.00px;">Free clusters:</div>
<div class="t" style="top:622.75px;font-size:8.5px;line-height:12px;color:#2e2e86;right:866.20px;text-align:right;">60 403</div>
<div class="t" style="top:633.75px;font-size:8.5px;line-height:12px;color:#222;left:10.00px;">Total clusters:</div>
<div class="t" style="top:633.75px;font-size:8.5px;line-height:12px;color:#2e2e86;right:866.20px;text-align:right;">60 416</div>
<div class="t" style="top:652.05px;font-size:8.5px;line-height:12px;color:#222;left:10.00px;">Bytes per sector:</div>
<div class="t" style="top:652.05px;font-size:8.5px;line-height:12px;color:#2e2e86;right:866.20px;text-align:right;">512</div>
<div class="t" style="top:662.75px;font-size:8.5px;line-height:12px;color:#222;left:10.00px;">Usable sectors:</div>
<div class="t" style="top:662.75px;font-size:8.5px;line-height:12px;color:#2e2e86;right:866.20px;text-align:right;">3 866 624</div>
<div class="t" style="top:673.95px;font-size:8.5px;line-height:12px;color:#222;left:10.00px;">First data sector:</div>
<div class="t" style="top:673.95px;font-size:8.5px;line-height:12px;color:#2e2e86;right:866.20px;text-align:right;">544</div>
<div class="t" style="top:691.85px;font-size:8.5px;line-height:12px;color:#222;left:10.00px;">Physical disk:</div>
<div class="t" style="top:691.85px;font-size:8.5px;line-height:12px;color:#2e2e86;right:866.20px;text-align:right;">8</div>
<div class="r" style="left:7px;top:335px;width:153px;height:1px;background:#e0ddcc;"></div>
<div class="r" style="left:7px;top:336px;width:153px;height:1px;background:#f4f2ea;"></div>
<div class="r" style="left:7px;top:400px;width:153px;height:1px;background:#e0ddcc;"></div>
<div class="r" style="left:7px;top:401px;width:153px;height:1px;background:#f4f2ea;"></div>
<div class="r" style="left:7px;top:511px;width:153px;height:1px;background:#e0ddcc;"></div>
<div class="r" style="left:7px;top:512px;width:153px;height:1px;background:#f4f2ea;"></div>
<div class="r" style="left:7px;top:605px;width:153px;height:1px;background:#e0ddcc;"></div>
<div class="r" style="left:7px;top:606px;width:153px;height:1px;background:#f4f2ea;"></div>
<div class="r" style="left:7px;top:710px;width:153px;height:1px;background:#e0ddcc;"></div>
<div class="r" style="left:7px;top:711px;width:153px;height:1px;background:#f4f2ea;"></div>
<div class="r" style="left:6px;top:712px;width:155px;height:11px;overflow:hidden;">
<div class="t" style="left:4px;top:3.5px;font-size:8.5px;line-height:12px;color:#222;">Display time zone:</div>
<div class="t" style="right:3px;top:3.5px;font-size:8.5px;line-height:12px;color:#2f2f6e;">original</div>
</div>
<div class="r" style="left:162px;top:288px;width:489px;height:14px;background:#ffffff;"></div>
<div class="r" style="left:162px;top:302px;width:444px;height:1px;background:#dcdad0;"></div>
<div class="r" style="left:229px;top:288px;width:1px;height:435px;background:#d9d7cc;"></div>
<div class="t" style="top:289.83px;font-size:10.4px;line-height:12px;color:#50507a;font-family:'Liberation Mono',monospace;letter-spacing:0.3px;left:175.90px;">Offset</div>
<div class="t" style="top:289.83px;font-size:10.4px;line-height:12px;color:#3a3a8a;font-family:'Liberation Mono',monospace;letter-spacing:-0.321px;left:192.32px;width:100px;text-align:center;">0</div>
<div class="t" style="top:289.83px;font-size:10.4px;line-height:12px;color:#3a3a8a;font-family:'Liberation Mono',monospace;letter-spacing:-0.321px;left:210.08px;width:100px;text-align:center;">1</div>
<div class="t" style="top:289.83px;font-size:10.4px;line-height:12px;color:#3a3a8a;font-family:'Liberation Mono',monospace;letter-spacing:-0.321px;left:227.84px;width:100px;text-align:center;">2</div>
<div class="t" style="top:289.83px;font-size:10.4px;line-height:12px;color:#3a3a8a;font-family:'Liberation Mono',monospace;letter-spacing:-0.321px;left:245.60px;width:100px;text-align:center;">3</div>
<div class="t" style="top:289.83px;font-size:10.4px;line-height:12px;color:#3a3a8a;font-family:'Liberation Mono',monospace;letter-spacing:-0.321px;left:263.36px;width:100px;text-align:center;">4</div>
<div class="t" style="top:289.83px;font-size:10.4px;line-height:12px;color:#3a3a8a;font-family:'Liberation Mono',monospace;letter-spacing:-0.321px;left:281.12px;width:100px;text-align:center;">5</div>
<div class="t" style="top:289.83px;font-size:10.4px;line-height:12px;color:#3a3a8a;font-family:'Liberation Mono',monospace;letter-spacing:-0.321px;left:298.88px;width:100px;text-align:center;">6</div>
<div class="t" style="top:289.83px;font-size:10.4px;line-height:12px;color:#3a3a8a;font-family:'Liberation Mono',monospace;letter-spacing:-0.321px;left:316.64px;width:100px;text-align:center;">7</div>
<div class="t" style="top:289.83px;font-size:10.4px;line-height:12px;color:#3a3a8a;font-family:'Liberation Mono',monospace;letter-spacing:-0.321px;left:340.80px;width:100px;text-align:center;">8</div>
<div class="t" style="top:289.83px;font-size:10.4px;line-height:12px;color:#3a3a8a;font-family:'Liberation Mono',monospace;letter-spacing:-0.321px;left:358.56px;width:100px;text-align:center;">9</div>
<div class="t" style="top:289.83px;font-size:10.4px;line-height:12px;color:#3a3a8a;font-family:'Liberation Mono',monospace;letter-spacing:-0.321px;left:376.32px;width:100px;text-align:center;">10</div>
<div class="t" style="top:289.83px;font-size:10.4px;line-height:12px;color:#3a3a8a;font-family:'Liberation Mono',monospace;letter-spacing:-0.321px;left:394.08px;width:100px;text-align:center;">11</div>
<div class="t" style="top:289.83px;font-size:10.4px;line-height:12px;color:#3a3a8a;font-family:'Liberation Mono',monospace;letter-spacing:-0.321px;left:411.84px;width:100px;text-align:center;">12</div>
<div class="t" style="top:289.83px;font-size:10.4px;line-height:12px;color:#3a3a8a;font-family:'Liberation Mono',monospace;letter-spacing:-0.321px;left:429.60px;width:100px;text-align:center;">13</div>
<div class="t" style="top:289.83px;font-size:10.4px;line-height:12px;color:#3a3a8a;font-family:'Liberation Mono',monospace;letter-spacing:-0.321px;left:447.36px;width:100px;text-align:center;">14</div>
<div class="t" style="top:303.93px;font-size:10.4px;line-height:12px;color:#46467a;font-family:'Liberation Mono',monospace;letter-spacing:-0.321px;left:166.70px;">0000000000</div>
<div class="t" style="top:303.93px;font-size:10.4px;line-height:12px;color:#222;font-family:'Liberation Mono',monospace;letter-spacing:-0.321px;left:234.90px;">EB 00 90 4D 53 44 4F 53</div>
<div class="t" style="top:303.93px;font-size:10.4px;line-height:12px;color:#222;font-family:'Liberation Mono',monospace;letter-spacing:-0.321px;left:383.38px;">35 2E 30 00 02 40 26</div>
<div class="t" style="top:303.93px;font-size:10.4px;line-height:12px;color:#222;font-family:'Liberation Mono',monospace;letter-spacing:-0.321px;left:512.00px;">ë<span style="color:#8a8a8a">.</span><span style="display:inline-block;width:5.92px;height:7px;position:relative;"><span style="position:absolute;left:1.5px;top:0;width:2.5px;height:7px;background:#111"></span></span>MSDOS5<span style="color:#8a8a8a">.</span>0<span style="color:#8a8a8a">.</span><span style="color:#8a8a8a">.</span>@&amp;</div>
<div class="t" style="top:315.79px;font-size:10.4px;line-height:12px;color:#46467a;font-family:'Liberation Mono',monospace;letter-spacing:-0.321px;left:166.70px;">0000000015</div>
<div class="t" style="top:315.79px;font-size:10.4px;line-height:12px;color:#222;font-family:'Liberation Mono',monospace;letter-spacing:-0.321px;left:234.90px;">00 02 00 02 00 00 F8 ED</div>
<div class="t" style="top:315.79px;font-size:10.4px;line-height:12px;color:#222;font-family:'Liberation Mono',monospace;letter-spacing:-0.321px;left:383.38px;">00 3F 00 40 00 E0 0D</div>
<div class="t" style="top:315.79px;font-size:10.4px;line-height:12px;color:#222;font-family:'Liberation Mono',monospace;letter-spacing:-0.321px;left:512.00px;"><span style="color:#8a8a8a">.</span><span style="color:#8a8a8a">.</span><span style="color:#8a8a8a">.</span><span style="color:#8a8a8a">.</span><span style="color:#8a8a8a">.</span><span style="color:#8a8a8a">.</span>øí<span style="color:#8a8a8a">.</span>?<span style="color:#8a8a8a">.</span>@<span style="color:#8a8a8a">.</span>à<span style="color:#8a8a8a">.</span></div>
<div class="t" style="top:327.64px;font-size:10.4px;line-height:12px;color:#46467a;font-family:'Liberation Mono',monospace;letter-spacing:-0.321px;left:166.70px;">0000000030</div>
<div class="t" style="top:327.64px;font-size:10.4px;line-height:12px;color:#222;font-family:'Liberation Mono',monospace;letter-spacing:-0.321px;left:234.90px;">00 00 20 02 3B 00 80 00</div>
<div class="t" style="top:327.64px;font-size:10.4px;line-height:12px;color:#222;font-family:'Liberation Mono',monospace;letter-spacing:-0.321px;left:383.38px;">29 13 18 FD E0 4B 49</div>
<div class="t" style="top:327.64px;font-size:10.4px;line-height:12px;color:#222;font-family:'Liberation Mono',monospace;letter-spacing:-0.321px;left:512.00px;"><span style="color:#8a8a8a">.</span><span style="color:#8a8a8a">.</span> <span style="color:#8a8a8a">.</span>;<span style="color:#8a8a8a">.</span><span style="display:inline-block;width:5.92px;height:7px;position:relative;"><span style="position:absolute;left:1.5px;top:0;width:2.5px;height:7px;background:#111"></span></span><span style="color:#8a8a8a">.</span>)<span style="color:#8a8a8a">.</span><span style="color:#8a8a8a">.</span>ýàKI</div>
<div class="t" style="top:339.49px;font-size:10.4px;line-height:12px;color:#46467a;font-family:'Liberation Mono',monospace;letter-spacing:-0.321px;left:166.70px;">0000000045</div>
<div class="t" style="top:339.49px;font-size:10.4px;line-height:12px;color:#222;font-family:'Liberation Mono',monospace;letter-spacing:-0.321px;left:234.90px;">4E 47 53 54 4F 4E 20 20</div>
<div class="t" style="top:339.49px;font-size:10.4px;line-height:12px;color:#222;font-family:'Liberation Mono',monospace;letter-spacing:-0.321px;left:383.38px;">20 46 41 54 31 36 20</div>
<div class="t" style="top:339.49px;font-size:10.4px;line-height:12px;color:#222;font-family:'Liberation Mono',monospace;letter-spacing:-0.321px;left:512.00px;">NGSTON   FAT16 </div>
<div class="t" style="top:351.34px;font-size:10.4px;line-height:12px;color:#46467a;font-family:'Liberation Mono',monospace;letter-spacing:-0.321px;left:166.70px;">0000000060</div>
<div class="t" style="top:351.34px;font-size:10.4px;line-height:12px;color:#222;font-family:'Liberation Mono',monospace;letter-spacing:-0.321px;left:234.90px;">20 20 00 00 00 00 00 00</div>
<div class="t" style="top:351.34px;font-size:10.4px;line-height:12px;color:#222;font-family:'Liberation Mono',monospace;letter-spacing:-0.321px;left:383.38px;">00 00 00 00 00 00 00</div>
<div class="t" style="top:351.34px;font-size:10.4px;line-height:12px;color:#222;font-family:'Liberation Mono',monospace;letter-spacing:-0.321px;left:512.00px;">  <span style="color:#8a8a8a">.</span><span style="color:#8a8a8a">.</span><span style="color:#8a8a8a">.</span><span style="color:#8a8a8a">.</span><span style="color:#8a8a8a">.</span><span style="color:#8a8a8a">.</span><span style="color:#8a8a8a">.</span><span style="color:#8a8a8a">.</span><span style="color:#8a8a8a">.</span><span style="color:#8a8a8a">.</span><span style="color:#8a8a8a">.</span><span style="color:#8a8a8a">.</span><span style="color:#8a8a8a">.</span></div>
<div class="t" style="top:363.20px;font-size:10.4px;line-height:12px;color:#46467a;font-family:'Liberation Mono',monospace;letter-spacing:-0.321px;left:166.70px;">0000000075</div>
<div class="t" style="top:363.20px;font-size:10.4px;line-height:12px;color:#222;font-family:'Liberation Mono',monospace;letter-spacing:-0.321px;left:234.90px;">00 00 00 00 00 00 00 00</div>
<div class="t" style="top:363.20px;font-size:10.4px;line-height:12px;color:#222;font-family:'Liberation Mono',monospace;letter-spacing:-0.321px;left:383.38px;">00 00 00 00 00 00 00</div>
<div class="t" style="top:363.20px;font-size:10.4px;line-height:12px;color:#222;font-family:'Liberation Mono',monospace;letter-spacing:-0.321px;left:512.00px;"><span style="color:#8a8a8a">.</span><span style="color:#8a8a8a">.</span><span style="color:#8a8a8a">.</span><span style="color:#8a8a8a">.</span><span style="color:#8a8a8a">.</span><span style="color:#8a8a8a">.</span><span style="color:#8a8a8a">.</span><span style="color:#8a8a8a">.</span><span style="color:#8a8a8a">.</span><span style="color:#8a8a8a">.</span><span style="color:#8a8a8a">.</span><span style="color:#8a8a8a">.</span><span style="color:#8a8a8a">.</span><span style="color:#8a8a8a">.</span><span style="color:#8a8a8a">.</span></div>
<div class="t" style="top:375.05px;font-size:10.4px;line-height:12px;color:#46467a;font-family:'Liberation Mono',monospace;letter-spacing:-0.321px;left:166.70px;">0000000090</div>
<div class="t" style="top:375.05px;font-size:10.4px;line-height:12px;color:#222;font-family:'Liberation Mono',monospace;letter-spacing:-0.321px;left:234.90px;">00 00 00 00 00 00 00 00</div>
<div class="t" style="top:375.05px;font-size:10.4px;line-height:12px;color:#222;font-family:'Liberation Mono',monospace;letter-spacing:-0.321px;left:383.38px;">00 00 00 00 00 00 00</div>
<div class="t" style="top:375.05px;font-size:10.4px;line-height:12px;color:#222;font-family:'Liberation Mono',monospace;letter-spacing:-0.321px;left:512.00px;"><span style="color:#8a8a8a">.</span><span style="color:#8a8a8a">.</span><span style="color:#8a8a8a">.</span><span style="color:#8a8a8a">.</span><span style="color:#8a8a8a">.</span><span style="color:#8a8a8a">.</span><span style="color:#8a8a8a">.</span><span style="color:#8a8a8a">.</span><span style="color:#8a8a8a">.</span><span style="color:#8a8a8a">.</span><span style="color:#8a8a8a">.</span><span style="color:#8a8a8a">.</span><span style="color:#8a8a8a">.</span><span style="color:#8a8a8a">.</span><span style="color:#8a8a8a">.</span></div>
<div class="t" style="top:386.90px;font-size:10.4px;line-height:12px;color:#46467a;font-family:'Liberation Mono',monospace;letter-spacing:-0.321px;left:166.70px;">0000000105</div>
<div class="t" style="top:386.90px;font-size:10.4px;line-height:12px;color:#222;font-family:'Liberation Mono',monospace;letter-spacing:-0.321px;left:234.90px;">00 00 00 00 00 00 00 00</div>
<div class="t" style="top:386.90px;font-size:10.4px;line-height:12px;color:#222;font-family:'Liberation Mono',monospace;letter-spacing:-0.321px;left:383.38px;">00 00 00 00 00 00 00</div>
<div class="t" style="top:386.90px;font-size:10.4px;line-height:12px;color:#222;font-family:'Liberation Mono',monospace;letter-spacing:-0.321px;left:512.00px;"><span style="color:#8a8a8a">.</span><span style="color:#8a8a8a">.</span><span style="color:#8a8a8a">.</span><span style="color:#8a8a8a">.</span><span style="color:#8a8a8a">.</span><span style="color:#8a8a8a">.</span><span style="color:#8a8a8a">.</span><span style="color:#8a8a8a">.</span><span style="color:#8a8a8a">.</span><span style="color:#8a8a8a">.</span><span style="color:#8a8a8a">.</span><span style="color:#8a8a8a">.</span><span style="color:#8a8a8a">.</span><span style="color:#8a8a8a">.</span><span style="color:#8a8a8a">.</span></div>
<div class="t" style="top:398.76px;font-size:10.4px;line-height:12px;color:#46467a;font-family:'Liberation Mono',monospace;letter-spacing:-0.321px;left:166.70px;">0000000120</div>
<div class="t" style="top:398.76px;font-size:10.4px;line-height:12px;color:#222;font-family:'Liberation Mono',monospace;letter-spacing:-0.321px;left:234.90px;">00 00 00 00 00 00 00 00</div>
<div class="t" style="top:398.76px;font-size:10.4px;line-height:12px;color:#222;font-family:'Liberation Mono',monospace;letter-spacing:-0.321px;left:383.38px;">00 00 00 00 00 00 00</div>
<div class="t" style="top:398.76px;font-size:10.4px;line-height:12px;color:#222;font-family:'Liberation Mono',monospace;letter-spacing:-0.321px;left:512.00px;"><span style="color:#8a8a8a">.</span><span style="color:#8a8a8a">.</span><span style="color:#8a8a8a">.</span><span style="color:#8a8a8a">.</span><span style="color:#8a8a8a">.</span><span style="color:#8a8a8a">.</span><span style="color:#8a8a8a">.</span><span style="color:#8a8a8a">.</span><span style="color:#8a8a8a">.</span><span style="color:#8a8a8a">.</span><span style="color:#8a8a8a">.</span><span style="color:#8a8a8a">.</span><span style="color:#8a8a8a">.</span><span style="color:#8a8a8a">.</span><span style="color:#8a8a8a">.</span></div>
<div class="t" style="top:410.61px;font-size:10.4px;line-height:12px;color:#46467a;font-family:'Liberation Mono',monospace;letter-spacing:-0.321px;left:166.70px;">0000000135</div>
<div class="t" style="top:410.61px;font-size:10.4px;line-height:12px;color:#222;font-family:'Liberation Mono',monospace;letter-spacing:-0.321px;left:234.90px;">00 00 00 00 00 00 00 00</div>
<div class="t" style="top:410.61px;font-size:10.4px;line-height:12px;color:#222;font-family:'Liberation Mono',monospace;letter-spacing:-0.321px;left:383.38px;">00 00 00 00 00 00 00</div>
<div class="t" style="top:410.61px;font-size:10.4px;line-height:12px;color:#222;font-family:'Liberation Mono',monospace;letter-spacing:-0.321px;left:512.00px;"><span style="color:#8a8a8a">.</span><span style="color:#8a8a8a">.</span><span style="color:#8a8a8a">.</span><span style="color:#8a8a8a">.</span><span style="color:#8a8a8a">.</span><span style="color:#8a8a8a">.</span><span style="color:#8a8a8a">.</span><span style="color:#8a8a8a">.</span><span style="color:#8a8a8a">.</span><span style="color:#8a8a8a">.</span><span style="color:#8a8a8a">.</span><span style="color:#8a8a8a">.</span><span style="color:#8a8a8a">.</span><span style="color:#8a8a8a">.</span><span style="color:#8a8a8a">.</span></div>
<div class="t" style="top:422.46px;font-size:10.4px;line-height:12px;color:#46467a;font-family:'Liberation Mono',monospace;letter-spacing:-0.321px;left:166.70px;">0000000150</div>
<div class="t" style="top:422.46px;font-size:10.4px;line-height:12px;color:#222;font-family:'Liberation Mono',monospace;letter-spacing:-0.321px;left:234.90px;">00 00 00 00 00 00 00 00</div>
<div class="t" style="top:422.46px;font-size:10.4px;line-height:12px;color:#222;font-family:'Liberation Mono',monospace;letter-spacing:-0.321px;left:383.38px;">00 00 00 00 00 00 00</div>
<div class="t" style="top:422.46px;font-size:10.4px;line-height:12px;color:#222;font-family:'Liberation Mono',monospace;letter-spacing:-0.321px;left:512.00px;"><span style="color:#8a8a8a">.</span><span style="color:#8a8a8a">.</span><span style="color:#8a8a8a">.</span><span style="color:#8a8a8a">.</span><span style="color:#8a8a8a">.</span><span style="color:#8a8a8a">.</span><span style="color:#8a8a8a">.</span><span style="color:#8a8a8a">.</span><span style="color:#8a8a8a">.</span><span style="color:#8a8a8a">.</span><span style="color:#8a8a8a">.</span><span style="color:#8a8a8a">.</span><span style="color:#8a8a8a">.</span><span style="color:#8a8a8a">.</span><span style="color:#8a8a8a">.</span></div>
<div class="t" style="top:434.32px;font-size:10.4px;line-height:12px;color:#46467a;font-family:'Liberation Mono',monospace;letter-spacing:-0.321px;left:166.70px;">0000000165</div>
<div class="t" style="top:434.32px;font-size:10.4px;line-height:12px;color:#222;font-family:'Liberation Mono',monospace;letter-spacing:-0.321px;left:234.90px;">00 00 00 00 00 00 00 00</div>
<div class="t" style="top:434.32px;font-size:10.4px;line-height:12px;color:#222;font-family:'Liberation Mono',monospace;letter-spacing:-0.321px;left:383.38px;">00 00 00 00 00 00 00</div>
<div class="t" style="top:434.32px;font-size:10.4px;line-height:12px;color:#222;font-family:'Liberation Mono',monospace;letter-spacing:-0.321px;left:512.00px;"><span style="color:#8a8a8a">.</span><span style="color:#8a8a8a">.</span><span style="color:#8a8a8a">.</span><span style="color:#8a8a8a">.</span><span style="color:#8a8a8a">.</span><span style="color:#8a8a8a">.</span><span style="color:#8a8a8a">.</span><span style="color:#8a8a8a">.</span><span style="color:#8a8a8a">.</span><span style="color:#8a8a8a">.</span><span style="color:#8a8a8a">.</span><span style="color:#8a8a8a">.</span><span style="color:#8a8a8a">.</span><span style="color:#8a8a8a">.</span><span style="color:#8a8a8a">.</span></div>
<div class="t" style="top:446.17px;font-size:10.4px;line-height:12px;color:#46467a;font-family:'Liberation Mono',monospace;letter-spacing:-0.321px;left:166.70px;">0000000180</div>
<div class="t" style="top:446.17px;font-size:10.4px;line-height:12px;color:#222;font-family:'Liberation Mono',monospace;letter-spacing:-0.321px;left:234.90px;">00 00 00 00 00 00 00 00</div>
<div class="t" style="top:446.17px;font-size:10.4px;line-height:12px;color:#222;font-family:'Liberation Mono',monospace;letter-spacing:-0.321px;left:383.38px;">00 00 00 00 00 00 00</div>
<div class="t" style="top:446.17px;font-size:10.4px;line-height:12px;color:#222;font-family:'Liberation Mono',monospace;letter-spacing:-0.321px;left:512.00px;"><span style="color:#8a8a8a">.</span><span style="color:#8a8a8a">.</span><span style="color:#8a8a8a">.</span><span style="color:#8a8a8a">.</span><span style="color:#8a8a8a">.</span><span style="color:#8a8a8a">.</span><span style="color:#8a8a8a">.</span><span style="color:#8a8a8a">.</span><span style="color:#8a8a8a">.</span><span style="color:#8a8a8a">.</span><span style="color:#8a8a8a">.</span><span style="color:#8a8a8a">.</span><span style="color:#8a8a8a">.</span><span style="color:#8a8a8a">.</span><span style="color:#8a8a8a">.</span></div>
<div class="t" style="top:458.02px;font-size:10.4px;line-height:12px;color:#46467a;font-family:'Liberation Mono',monospace;letter-spacing:-0.321px;left:166.70px;">0000000195</div>
<div class="t" style="top:458.02px;font-size:10.4px;line-height:12px;color:#222;font-family:'Liberation Mono',monospace;letter-spacing:-0.321px;left:234.90px;">00 00 00 00 00 00 00 00</div>
<div class="t" style="top:458.02px;font-size:10.4px;line-height:12px;color:#222;font-family:'Liberation Mono',monospace;letter-spacing:-0.321px;left:383.38px;">00 00 00 00 00 00 00</div>
<div class="t" style="top:458.02px;font-size:10.4px;line-height:12px;color:#222;font-family:'Liberation Mono',monospace;letter-spacing:-0.321px;left:512.00px;"><span style="color:#8a8a8a">.</span><span style="color:#8a8a8a">.</span><span style="color:#8a8a8a">.</span><span style="color:#8a8a8a">.</span><span style="color:#8a8a8a">.</span><span style="color:#8a8a8a">.</span><span style="color:#8a8a8a">.</span><span style="color:#8a8a8a">.</span><span style="color:#8a8a8a">.</span><span style="color:#8a8a8a">.</span><span style="color:#8a8a8a">.</span><span style="color:#8a8a8a">.</span><span style="color:#8a8a8a">.</span><span style="color:#8a8a8a">.</span><span style="color:#8a8a8a">.</span></div>
<div class="t" style="top:469.87px;font-size:10.4px;line-height:12px;color:#46467a;font-family:'Liberation Mono',monospace;letter-spacing:-0.321px;left:166.70px;">0000000210</div>
<div class="t" style="top:469.87px;font-size:10.4px;line-height:12px;color:#222;font-family:'Liberation Mono',monospace;letter-spacing:-0.321px;left:234.90px;">00 00 00 00 00 00 00 00</div>
<div class="t" style="top:469.87px;font-size:10.4px;line-height:12px;color:#222;font-family:'Liberation Mono',monospace;letter-spacing:-0.321px;left:383.38px;">00 00 00 00 00 00 00</div>
<div class="t" style="top:469.87px;font-size:10.4px;line-height:12px;color:#222;font-family:'Liberation Mono',monospace;letter-spacing:-0.321px;left:512.00px;"><span style="color:#8a8a8a">.</span><span style="color:#8a8a8a">.</span><span style="color:#8a8a8a">.</span><span style="color:#8a8a8a">.</span><span style="color:#8a8a8a">.</span><span style="color:#8a8a8a">.</span><span style="color:#8a8a8a">.</span><span style="color:#8a8a8a">.</span><span style="color:#8a8a8a">.</span><span style="color:#8a8a8a">.</span><span style="color:#8a8a8a">.</span><span style="color:#8a8a8a">.</span><span style="color:#8a8a8a">.</span><span style="color:#8a8a8a">.</span><span style="color:#8a8a8a">.</span></div>
<div class="t" style="top:481.73px;font-size:10.4px;line-height:12px;color:#46467a;font-family:'Liberation Mono',monospace;letter-spacing:-0.321px;left:166.70px;">0000000225</div>
<div class="t" style="top:481.73px;font-size:10.4px;line-height:12px;color:#222;font-family:'Liberation Mono',monospace;letter-spacing:-0.321px;left:234.90px;">00 00 00 00 00 00 00 00</div>
<div class="t" style="top:481.73px;font-size:10.4px;line-height:12px;color:#222;font-family:'Liberation Mono',monospace;letter-spacing:-0.321px;left:383.38px;">00 00 00 00 00 00 00</div>
<div class="t" style="top:481.73px;font-size:10.4px;line-height:12px;color:#222;font-family:'Liberation Mono',monospace;letter-spacing:-0.321px;left:512.00px;"><span style="color:#8a8a8a">.</span><span style="color:#8a8a8a">.</span><span style="color:#8a8a8a">.</span><span style="color:#8a8a8a">.</span><span style="color:#8a8a8a">.</span><span style="color:#8a8a8a">.</span><span style="color:#8a8a8a">.</span><span style="color:#8a8a8a">.</span><span style="color:#8a8a8a">.</span><span style="color:#8a8a8a">.</span><span style="color:#8a8a8a">.</span><span style="color:#8a8a8a">.</span><span style="color:#8a8a8a">.</span><span style="color:#8a8a8a">.</span><span style="color:#8a8a8a">.</span></div>
<div class="t" style="top:493.58px;font-size:10.4px;line-height:12px;color:#46467a;font-family:'Liberation Mono',monospace;letter-spacing:-0.321px;left:166.70px;">0000000240</div>
<div class="t" style="top:493.58px;font-size:10.4px;line-height:12px;color:#222;font-family:'Liberation Mono',monospace;letter-spacing:-0.321px;left:234.90px;">00 00 00 00 00 00 00 00</div>
<div class="t" style="top:493.58px;font-size:10.4px;line-height:12px;color:#222;font-family:'Liberation Mono',monospace;letter-spacing:-0.321px;left:383.38px;">00 00 00 00 00 00 00</div>
<div class="t" style="top:493.58px;font-size:10.4px;line-height:12px;color:#222;font-family:'Liberation Mono',monospace;letter-spacing:-0.321px;left:512.00px;"><span style="color:#8a8a8a">.</span><span style="color:#8a8a8a">.</span><span style="color:#8a8a8a">.</span><span style="color:#8a8a8a">.</span><span style="color:#8a8a8a">.</span><span style="color:#8a8a8a">.</span><span style="color:#8a8a8a">.</span><span style="color:#8a8a8a">.</span><span style="color:#8a8a8a">.</span><span style="color:#8a8a8a">.</span><span style="color:#8a8a8a">.</span><span style="color:#8a8a8a">.</span><span style="color:#8a8a8a">.</span><span style="color:#8a8a8a">.</span><span style="color:#8a8a8a">.</span></div>
<div class="t" style="top:505.43px;font-size:10.4px;line-height:12px;color:#46467a;font-family:'Liberation Mono',monospace;letter-spacing:-0.321px;left:166.70px;">0000000255</div>
<div class="t" style="top:505.43px;font-size:10.4px;line-height:12px;color:#222;font-family:'Liberation Mono',monospace;letter-spacing:-0.321px;left:234.90px;">00 00 00 00 00 00 00 00</div>
<div class="t" style="top:505.43px;font-size:10.4px;line-height:12px;color:#222;font-family:'Liberation Mono',monospace;letter-spacing:-0.321px;left:383.38px;">00 00 00 00 00 00 00</div>
<div class="t" style="top:505.43px;font-size:10.4px;line-height:12px;color:#222;font-family:'Liberation Mono',monospace;letter-spacing:-0.321px;left:512.00px;"><span style="color:#8a8a8a">.</span><span style="color:#8a8a8a">.</span><span style="color:#8a8a8a">.</span><span style="color:#8a8a8a">.</span><span style="color:#8a8a8a">.</span><span style="color:#8a8a8a">.</span><span style="color:#8a8a8a">.</span><span style="color:#8a8a8a">.</span><span style="color:#8a8a8a">.</span><span style="color:#8a8a8a">.</span><span style="color:#8a8a8a">.</span><span style="color:#8a8a8a">.</span><span style="color:#8a8a8a">.</span><span style="color:#8a8a8a">.</span><span style="color:#8a8a8a">.</span></div>
<div class="t" style="top:517.29px;font-size:10.4px;line-height:12px;color:#46467a;font-family:'Liberation Mono',monospace;letter-spacing:-0.321px;left:166.70px;">0000000270</div>
<div class="t" style="top:517.29px;font-size:10.4px;line-height:12px;color:#222;font-family:'Liberation Mono',monospace;letter-spacing:-0.321px;left:234.90px;">00 00 00 00 00 00 00 00</div>
<div class="t" style="top:517.29px;font-size:10.4px;line-height:12px;color:#222;font-family:'Liberation Mono',monospace;letter-spacing:-0.321px;left:383.38px;">00 00 00 00 00 00 00</div>
<div class="t" style="top:517.29px;font-size:10.4px;line-height:12px;color:#222;font-family:'Liberation Mono',monospace;letter-spacing:-0.321px;left:512.00px;"><span style="color:#8a8a8a">.</span><span style="color:#8a8a8a">.</span><span style="color:#8a8a8a">.</span><span style="color:#8a8a8a">.</span><span style="color:#8a8a8a">.</span><span style="color:#8a8a8a">.</span><span style="color:#8a8a8a">.</span><span style="color:#8a8a8a">.</span><span style="color:#8a8a8a">.</span><span style="color:#8a8a8a">.</span><span style="color:#8a8a8a">.</span><span style="color:#8a8a8a">.</span><span style="color:#8a8a8a">.</span><span style="color:#8a8a8a">.</span><span style="color:#8a8a8a">.</span></div>
<div class="t" style="top:529.14px;font-size:10.4px;line-height:12px;color:#46467a;font-family:'Liberation Mono',monospace;letter-spacing:-0.321px;left:166.70px;">0000000285</div>
<div class="t" style="top:529.14px;font-size:10.4px;line-height:12px;color:#222;font-family:'Liberation Mono',monospace;letter-spacing:-0.321px;left:234.90px;">00 00 00 00 00 00 00 00</div>
<div class="t" style="top:529.14px;font-size:10.4px;line-height:12px;color:#222;font-family:'Liberation Mono',monospace;letter-spacing:-0.321px;left:383.38px;">00 00 00 00 00 00 00</div>
<div class="t" style="top:529.14px;font-size:10.4px;line-height:12px;color:#222;font-family:'Liberation Mono',monospace;letter-spacing:-0.321px;left:512.00px;"><span style="color:#8a8a8a">.</span><span style="color:#8a8a8a">.</span><span style="color:#8a8a8a">.</span><span style="color:#8a8a8a">.</span><span style="color:#8a8a8a">.</span><span style="color:#8a8a8a">.</span><span style="color:#8a8a8a">.</span><span style="color:#8a8a8a">.</span><span style="color:#8a8a8a">.</span><span style="color:#8a8a8a">.</span><span style="color:#8a8a8a">.</span><span style="color:#8a8a8a">.</span><span style="color:#8a8a8a">.</span><span style="color:#8a8a8a">.</span><span style="color:#8a8a8a">.</span></div>
<div class="t" style="top:540.99px;font-size:10.4px;line-height:12px;color:#46467a;font-family:'Liberation Mono',monospace;letter-spacing:-0.321px;left:166.70px;">0000000300</div>
<div class="t" style="top:540.99px;font-size:10.4px;line-height:12px;color:#222;font-family:'Liberation Mono',monospace;letter-spacing:-0.321px;left:234.90px;">00 00 00 00 00 00 00 00</div>
<div class="t" style="top:540.99px;font-size:10.4px;line-height:12px;color:#222;font-family:'Liberation Mono',monospace;letter-spacing:-0.321px;left:383.38px;">00 00 00 00 00 00 00</div>
<div class="t" style="top:540.99px;font-size:10.4px;line-height:12px;color:#222;font-family:'Liberation Mono',monospace;letter-spacing:-0.321px;left:512.00px;"><span style="color:#8a8a8a">.</span><span style="color:#8a8a8a">.</span><span style="color:#8a8a8a">.</span><span style="color:#8a8a8a">.</span><span style="color:#8a8a8a">.</span><span style="color:#8a8a8a">.</span><span style="color:#8a8a8a">.</span><span style="color:#8a8a8a">.</span><span style="color:#8a8a8a">.</span><span style="color:#8a8a8a">.</span><span style="color:#8a8a8a">.</span><span style="color:#8a8a8a">.</span><span style="color:#8a8a8a">.</span><span style="color:#8a8a8a">.</span><span style="color:#8a8a8a">.</span></div>
<div class="t" style="top:552.85px;font-size:10.4px;line-height:12px;color:#46467a;font-family:'Liberation Mono',monospace;letter-spacing:-0.321px;left:166.70px;">0000000315</div>
<div class="t" style="top:552.85px;font-size:10.4px;line-height:12px;color:#222;font-family:'Liberation Mono',monospace;letter-spacing:-0.321px;left:234.90px;">00 00 00 00 00 00 00 00</div>
<div class="t" style="top:552.85px;font-size:10.4px;line-height:12px;color:#222;font-family:'Liberation Mono',monospace;letter-spacing:-0.321px;left:383.38px;">00 00 00 00 00 00 00</div>
<div class="t" style="top:552.85px;font-size:10.4px;line-height:12px;color:#222;font-family:'Liberation Mono',monospace;letter-spacing:-0.321px;left:512.00px;"><span style="color:#8a8a8a">.</span><span style="color:#8a8a8a">.</span><span style="color:#8a8a8a">.</span><span style="color:#8a8a8a">.</span><span style="color:#8a8a8a">.</span><span style="color:#8a8a8a">.</span><span style="color:#8a8a8a">.</span><span style="color:#8a8a8a">.</span><span style="color:#8a8a8a">.</span><span style="color:#8a8a8a">.</span><span style="color:#8a8a8a">.</span><span style="color:#8a8a8a">.</span><span style="color:#8a8a8a">.</span><span style="color:#8a8a8a">.</span><span style="color:#8a8a8a">.</span></div>
<div class="t" style="top:564.70px;font-size:10.4px;line-height:12px;color:#46467a;font-family:'Liberation Mono',monospace;letter-spacing:-0.321px;left:166.70px;">0000000330</div>
<div class="t" style="top:564.70px;font-size:10.4px;line-height:12px;color:#222;font-family:'Liberation Mono',monospace;letter-spacing:-0.321px;left:234.90px;">00 00 00 00 00 00 00 00</div>
<div class="t" style="top:564.70px;font-size:10.4px;line-height:12px;color:#222;font-family:'Liberation Mono',monospace;letter-spacing:-0.321px;left:383.38px;">00 00 00 00 00 00 00</div>
<div class="t" style="top:564.70px;font-size:10.4px;line-height:12px;color:#222;font-family:'Liberation Mono',monospace;letter-spacing:-0.321px;left:512.00px;"><span style="color:#8a8a8a">.</span><span style="color:#8a8a8a">.</span><span style="color:#8a8a8a">.</span><span style="color:#8a8a8a">.</span><span style="color:#8a8a8a">.</span><span style="color:#8a8a8a">.</span><span style="color:#8a8a8a">.</span><span style="color:#8a8a8a">.</span><span style="color:#8a8a8a">.</span><span style="color:#8a8a8a">.</span><span style="color:#8a8a8a">.</span><span style="color:#8a8a8a">.</span><span style="color:#8a8a8a">.</span><span style="color:#8a8a8a">.</span><span style="color:#8a8a8a">.</span></div>
<div class="t" style="top:576.55px;font-size:10.4px;line-height:12px;color:#46467a;font-family:'Liberation Mono',monospace;letter-spacing:-0.321px;left:166.70px;">0000000345</div>
<div class="t" style="top:576.55px;font-size:10.4px;line-height:12px;color:#222;font-family:'Liberation Mono',monospace;letter-spacing:-0.321px;left:234.90px;">00 00 00 00 00 00 00 00</div>
<div class="t" style="top:576.55px;font-size:10.4px;line-height:12px;color:#222;font-family:'Liberation Mono',monospace;letter-spacing:-0.321px;left:383.38px;">00 00 00 00 00 00 00</div>
<div class="t" style="top:576.55px;font-size:10.4px;line-height:12px;color:#222;font-family:'Liberation Mono',monospace;letter-spacing:-0.321px;left:512.00px;"><span style="color:#8a8a8a">.</span><span style="color:#8a8a8a">.</span><span style="color:#8a8a8a">.</span><span style="color:#8a8a8a">.</span><span style="color:#8a8a8a">.</span><span style="color:#8a8a8a">.</span><span style="color:#8a8a8a">.</span><span style="color:#8a8a8a">.</span><span style="color:#8a8a8a">.</span><span style="color:#8a8a8a">.</span><span style="color:#8a8a8a">.</span><span style="color:#8a8a8a">.</span><span style="color:#8a8a8a">.</span><span style="color:#8a8a8a">.</span><span style="color:#8a8a8a">.</span></div>
<div class="t" style="top:588.40px;font-size:10.4px;line-height:12px;color:#46467a;font-family:'Liberation Mono',monospace;letter-spacing:-0.321px;left:166.70px;">0000000360</div>
<div class="t" style="top:588.40px;font-size:10.4px;line-height:12px;color:#222;font-family:'Liberation Mono',monospace;letter-spacing:-0.321px;left:234.90px;">00 00 00 00 00 00 00 00</div>
<div class="t" style="top:588.40px;font-size:10.4px;line-height:12px;color:#222;font-family:'Liberation Mono',monospace;letter-spacing:-0.321px;left:383.38px;">00 00 00 00 00 00 00</div>
<div class="t" style="top:588.40px;font-size:10.4px;line-height:12px;color:#222;font-family:'Liberation Mono',monospace;letter-spacing:-0.321px;left:512.00px;"><span style="color:#8a8a8a">.</span><span style="color:#8a8a8a">.</span><span style="color:#8a8a8a">.</span><span style="color:#8a8a8a">.</span><span style="color:#8a8a8a">.</span><span style="color:#8a8a8a">.</span><span style="color:#8a8a8a">.</span><span style="color:#8a8a8a">.</span><span style="color:#8a8a8a">.</span><span style="color:#8a8a8a">.</span><span style="color:#8a8a8a">.</span><span style="color:#8a8a8a">.</span><span style="color:#8a8a8a">.</span><span style="color:#8a8a8a">.</span><span style="color:#8a8a8a">.</span></div>
<div class="t" style="top:600.26px;font-size:10.4px;line-height:12px;color:#46467a;font-family:'Liberation Mono',monospace;letter-spacing:-0.321px;left:166.70px;">0000000375</div>
<div class="t" style="top:600.26px;font-size:10.4px;line-height:12px;color:#222;font-family:'Liberation Mono',monospace;letter-spacing:-0.321px;left:234.90px;">00 00 00 00 00 00 00 00</div>
<div class="t" style="top:600.26px;font-size:10.4px;line-height:12px;color:#222;font-family:'Liberation Mono',monospace;letter-spacing:-0.321px;left:383.38px;">00 00 00 00 00 00 00</div>
<div class="t" style="top:600.26px;font-size:10.4px;line-height:12px;color:#222;font-family:'Liberation Mono',monospace;letter-spacing:-0.321px;left:512.00px;"><span style="color:#8a8a8a">.</span><span style="color:#8a8a8a">.</span><span style="color:#8a8a8a">.</span><span style="color:#8a8a8a">.</span><span style="color:#8a8a8a">.</span><span style="color:#8a8a8a">.</span><span style="color:#8a8a8a">.</span><span style="color:#8a8a8a">.</span><span style="color:#8a8a8a">.</span><span style="color:#8a8a8a">.</span><span style="color:#8a8a8a">.</span><span style="color:#8a8a8a">.</span><span style="color:#8a8a8a">.</span><span style="color:#8a8a8a">.</span><span style="color:#8a8a8a">.</span></div>
<div class="t" style="top:612.11px;font-size:10.4px;line-height:12px;color:#46467a;font-family:'Liberation Mono',monospace;letter-spacing:-0.321px;left:166.70px;">0000000390</div>
<div class="t" style="top:612.11px;font-size:10.4px;line-height:12px;color:#222;font-family:'Liberation Mono',monospace;letter-spacing:-0.321px;left:234.90px;">00 00 00 00 00 00 00 00</div>
<div class="t" style="top:612.11px;font-size:10.4px;line-height:12px;color:#222;font-family:'Liberation Mono',monospace;letter-spacing:-0.321px;left:383.38px;">00 00 00 00 00 00 00</div>
<div class="t" style="top:612.11px;font-size:10.4px;line-height:12px;color:#222;font-family:'Liberation Mono',monospace;letter-spacing:-0.321px;left:512.00px;"><span style="color:#8a8a8a">.</span><span style="color:#8a8a8a">.</span><span style="color:#8a8a8a">.</span><span style="color:#8a8a8a">.</span><span style="color:#8a8a8a">.</span><span style="color:#8a8a8a">.</span><span style="color:#8a8a8a">.</span><span style="color:#8a8a8a">.</span><span style="color:#8a8a8a">.</span><span style="color:#8a8a8a">.</span><span style="color:#8a8a8a">.</span><span style="color:#8a8a8a">.</span><span style="color:#8a8a8a">.</span><span style="color:#8a8a8a">.</span><span style="color:#8a8a8a">.</span></div>
<div class="t" style="top:623.96px;font-size:10.4px;line-height:12px;color:#46467a;font-family:'Liberation Mono',monospace;letter-spacing:-0.321px;left:166.70px;">0000000405</div>
<div class="t" style="top:623.96px;font-size:10.4px;line-height:12px;color:#222;font-family:'Liberation Mono',monospace;letter-spacing:-0.321px;left:234.90px;">00 00 00 00 00 00 00 00</div>
<div class="t" style="top:623.96px;font-size:10.4px;line-height:12px;color:#222;font-family:'Liberation Mono',monospace;letter-spacing:-0.321px;left:383.38px;">00 00 00 00 00 00 00</div>
<div class="t" style="top:623.96px;font-size:10.4px;line-height:12px;color:#222;font-family:'Liberation Mono',monospace;letter-spacing:-0.321px;left:512.00px;"><span style="color:#8a8a8a">.</span><span style="color:#8a8a8a">.</span><span style="color:#8a8a8a">.</span><span style="color:#8a8a8a">.</span><span style="color:#8a8a8a">.</span><span style="color:#8a8a8a">.</span><span style="color:#8a8a8a">.</span><span style="color:#8a8a8a">.</span><span style="color:#8a8a8a">.</span><span style="color:#8a8a8a">.</span><span style="color:#8a8a8a">.</span><span style="color:#8a8a8a">.</span><span style="color:#8a8a8a">.</span><span style="color:#8a8a8a">.</span><span style="color:#8a8a8a">.</span></div>
<div class="t" style="top:635.82px;font-size:10.4px;line-height:12px;color:#46467a;font-family:'Liberation Mono',monospace;letter-spacing:-0.321px;left:166.70px;">0000000420</div>
<div class="t" style="top:635.82px;font-size:10.4px;line-height:12px;color:#222;font-family:'Liberation Mono',monospace;letter-spacing:-0.321px;left:234.90px;">00 00 00 00 00 00 00 00</div>
<div class="t" style="top:635.82px;font-size:10.4px;line-height:12px;color:#222;font-family:'Liberation Mono',monospace;letter-spacing:-0.321px;left:383.38px;">00 00 00 00 00 00 00</div>
<div class="t" style="top:635.82px;font-size:10.4px;line-height:12px;color:#222;font-family:'Liberation Mono',monospace;letter-spacing:-0.321px;left:512.00px;"><span style="color:#8a8a8a">.</span><span style="color:#8a8a8a">.</span><span style="color:#8a8a8a">.</span><span style="color:#8a8a8a">.</span><span style="color:#8a8a8a">.</span><span style="color:#8a8a8a">.</span><span style="color:#8a8a8a">.</span><span style="color:#8a8a8a">.</span><span style="color:#8a8a8a">.</span><span style="color:#8a8a8a">.</span><span style="color:#8a8a8a">.</span><span style="color:#8a8a8a">.</span><span style="color:#8a8a8a">.</span><span style="color:#8a8a8a">.</span><span style="color:#8a8a8a">.</span></div>
<div class="t" style="top:647.67px;font-size:10.4px;line-height:12px;color:#46467a;font-family:'Liberation Mono',monospace;letter-spacing:-0.321px;left:166.70px;">0000000435</div>
<div class="t" style="top:647.67px;font-size:10.4px;line-height:12px;color:#222;font-family:'Liberation Mono',monospace;letter-spacing:-0.321px;left:234.90px;">00 00 00 00 00 00 00 00</div>
<div class="t" style="top:647.67px;font-size:10.4px;line-height:12px;color:#222;font-family:'Liberation Mono',monospace;letter-spacing:-0.321px;left:383.38px;">00 00 00 00 00 00 00</div>
<div class="t" style="top:647.67px;font-size:10.4px;line-height:12px;color:#222;font-family:'Liberation Mono',monospace;letter-spacing:-0.321px;left:512.00px;"><span style="color:#8a8a8a">.</span><span style="color:#8a8a8a">.</span><span style="color:#8a8a8a">.</span><span style="color:#8a8a8a">.</span><span style="color:#8a8a8a">.</span><span style="color:#8a8a8a">.</span><span style="color:#8a8a8a">.</span><span style="color:#8a8a8a">.</span><span style="color:#8a8a8a">.</span><span style="color:#8a8a8a">.</span><span style="color:#8a8a8a">.</span><span style="color:#8a8a8a">.</span><span style="color:#8a8a8a">.</span><span style="color:#8a8a8a">.</span><span style="color:#8a8a8a">.</span></div>
<div class="t" style="top:659.52px;font-size:10.4px;line-height:12px;color:#46467a;font-family:'Liberation Mono',monospace;letter-spacing:-0.321px;left:166.70px;">0000000450</div>
<div class="t" style="top:659.52px;font-size:10.4px;line-height:12px;color:#222;font-family:'Liberation Mono',monospace;letter-spacing:-0.321px;left:234.90px;">00 00 00 00 00 00 00 00</div>
<div class="t" style="top:659.52px;font-size:10.4px;line-height:12px;color:#222;font-family:'Liberation Mono',monospace;letter-spacing:-0.321px;left:383.38px;">00 00 00 00 00 00 00</div>
<div class="t" style="top:659.52px;font-size:10.4px;line-height:12px;color:#222;font-family:'Liberation Mono',monospace;letter-spacing:-0.321px;left:512.00px;"><span style="color:#8a8a8a">.</span><span style="color:#8a8a8a">.</span><span style="color:#8a8a8a">.</span><span style="color:#8a8a8a">.</span><span style="color:#8a8a8a">.</span><span style="color:#8a8a8a">.</span><span style="color:#8a8a8a">.</span><span style="color:#8a8a8a">.</span><span style="color:#8a8a8a">.</span><span style="color:#8a8a8a">.</span><span style="color:#8a8a8a">.</span><span style="color:#8a8a8a">.</span><span style="color:#8a8a8a">.</span><span style="color:#8a8a8a">.</span><span style="color:#8a8a8a">.</span></div>
<div class="t" style="top:671.38px;font-size:10.4px;line-height:12px;color:#46467a;font-family:'Liberation Mono',monospace;letter-spacing:-0.321px;left:166.70px;">0000000465</div>
<div class="t" style="top:671.38px;font-size:10.4px;line-height:12px;color:#222;font-family:'Liberation Mono',monospace;letter-spacing:-0.321px;left:234.90px;">00 00 00 00 00 00 00 00</div>
<div class="t" style="top:671.38px;font-size:10.4px;line-height:12px;color:#222;font-family:'Liberation Mono',monospace;letter-spacing:-0.321px;left:383.38px;">00 00 00 00 00 00 00</div>
<div class="t" style="top:671.38px;font-size:10.4px;line-height:12px;color:#222;font-family:'Liberation Mono',monospace;letter-spacing:-0.321px;left:512.00px;"><span style="color:#8a8a8a">.</span><span style="color:#8a8a8a">.</span><span style="color:#8a8a8a">.</span><span style="color:#8a8a8a">.</span><span style="color:#8a8a8a">.</span><span style="color:#8a8a8a">.</span><span style="color:#8a8a8a">.</span><span style="color:#8a8a8a">.</span><span style="color:#8a8a8a">.</span><span style="color:#8a8a8a">.</span><span style="color:#8a8a8a">.</span><span style="color:#8a8a8a">.</span><span style="color:#8a8a8a">.</span><span style="color:#8a8a8a">.</span><span style="color:#8a8a8a">.</span></div>
<div class="t" style="top:683.23px;font-size:10.4px;line-height:12px;color:#46467a;font-family:'Liberation Mono',monospace;letter-spacing:-0.321px;left:166.70px;">0000000480</div>
<div class="t" style="top:683.23px;font-size:10.4px;line-height:12px;color:#222;font-family:'Liberation Mono',monospace;letter-spacing:-0.321px;left:234.90px;">00 00 00 00 00 00 00 00</div>
<div class="t" style="top:683.23px;font-size:10.4px;line-height:12px;color:#222;font-family:'Liberation Mono',monospace;letter-spacing:-0.321px;left:383.38px;">00 00 00 00 00 00 00</div>
<div class="t" style="top:683.23px;font-size:10.4px;line-height:12px;color:#222;font-family:'Liberation Mono',monospace;letter-spacing:-0.321px;left:512.00px;"><span style="color:#8a8a8a">.</span><span style="color:#8a8a8a">.</span><span style="color:#8a8a8a">.</span><span style="color:#8a8a8a">.</span><span style="color:#8a8a8a">.</span><span style="color:#8a8a8a">.</span><span style="color:#8a8a8a">.</span><span style="color:#8a8a8a">.</span><span style="color:#8a8a8a">.</span><span style="color:#8a8a8a">.</span><span style="color:#8a8a8a">.</span><span style="color:#8a8a8a">.</span><span style="color:#8a8a8a">.</span><span style="color:#8a8a8a">.</span><span style="color:#8a8a8a">.</span></div>
<div class="t" style="top:695.08px;font-size:10.4px;line-height:12px;color:#46467a;font-family:'Liberation Mono',monospace;letter-spacing:-0.321px;left:166.70px;">0000000495</div>
<div class="t" style="top:695.08px;font-size:10.4px;line-height:12px;color:#222;font-family:'Liberation Mono',monospace;letter-spacing:-0.321px;left:234.90px;">00 00 00 00 00 00 00 00</div>
<div class="t" style="top:695.08px;font-size:10.4px;line-height:12px;color:#222;font-family:'Liberation Mono',monospace;letter-spacing:-0.321px;left:383.38px;">00 00 00 00 00 00 00</div>
<div class="t" style="top:695.08px;font-size:10.4px;line-height:12px;color:#222;font-family:'Liberation Mono',monospace;letter-spacing:-0.321px;left:512.00px;"><span style="color:#8a8a8a">.</span><span style="color:#8a8a8a">.</span><span style="color:#8a8a8a">.</span><span style="color:#8a8a8a">.</span><span style="color:#8a8a8a">.</span><span style="color:#8a8a8a">.</span><span style="color:#8a8a8a">.</span><span style="color:#8a8a8a">.</span><span style="color:#8a8a8a">.</span><span style="color:#8a8a8a">.</span><span style="color:#8a8a8a">.</span><span style="color:#8a8a8a">.</span><span style="color:#8a8a8a">.</span><span style="color:#8a8a8a">.</span><span style="color:#8a8a8a">.</span></div>
<div class="t" style="top:706.93px;font-size:10.4px;line-height:12px;color:#46467a;font-family:'Liberation Mono',monospace;letter-spacing:-0.321px;left:166.70px;">0000000510</div>
<div class="t" style="top:706.93px;font-size:10.4px;line-height:12px;color:#222;font-family:'Liberation Mono',monospace;letter-spacing:-0.321px;left:234.90px;">55 <b>AA</b> 00 00 00 00 00 00</div>
<div class="t" style="top:706.93px;font-size:10.4px;line-height:12px;color:#222;font-family:'Liberation Mono',monospace;letter-spacing:-0.321px;left:383.38px;">00 00 00 00 00 00 00</div>
<div class="t" style="top:706.93px;font-size:10.4px;line-height:12px;color:#222;font-family:'Liberation Mono',monospace;letter-spacing:-0.321px;left:512.00px;">Uª<span style="color:#8a8a8a">.</span><span style="color:#8a8a8a">.</span><span style="color:#8a8a8a">.</span><span style="color:#8a8a8a">.</span><span style="color:#8a8a8a">.</span><span style="color:#8a8a8a">.</span><span style="color:#8a8a8a">.</span><span style="color:#8a8a8a">.</span><span style="color:#8a8a8a">.</span><span style="color:#8a8a8a">.</span><span style="color:#8a8a8a">.</span><span style="color:#8a8a8a">.</span><span style="color:#8a8a8a">.</span></div>
<div class="r" style="left:506px;top:288px;width:26px;height:14px;background:linear-gradient(#f0eee4,#dcd8c6);box-sizing:border-box;border-right:1px solid #a8a490;"></div>
<div class="r" style="left:532px;top:288px;width:28px;height:14px;background:linear-gradient(#f6f4ec,#e8e4d4);box-sizing:border-box;border:1px solid #b0ac98;"></div>
<div class="r" style="left:560px;top:288px;width:25px;height:14px;background:linear-gradient(#f0eee4,#dcd8c6);"></div>
<svg style="left:542px;top:290px" width="14" height="11"><circle cx="5" cy="4" r="3" fill="none" stroke="#8fbf3f" stroke-width="1.3"/><path d="M6 7l4 3M11 2v7" stroke="#5a6ea0" stroke-width="1.2"/></svg>
<svg style="left:514px;top:291px" width="12" height="10"><path d="M2 6l3 2L10 2" stroke="#cfcbbb" stroke-width="1" fill="none"/></svg>
<svg style="left:566px;top:291px" width="14" height="10"><path d="M1 3C5 3 8 4 12 7" stroke="#9fb7b0" stroke-width="1" fill="none"/></svg>
<div class="r" style="left:606px;top:288px;width:11px;height:435px;background:#f6f5f0;"></div>
<div class="r" style="left:606.5px;top:288.5px;width:10.5px;height:12.5px;background:#c6d4f8;border-radius:1px;"></div>
<svg style="left:607px;top:290px" width="10" height="9"><path d="M2 6l3-3 3 3" stroke="#4a5a98" stroke-width="1.5" fill="none"/></svg>
<div class="r" style="left:606.5px;top:302px;width:10.5px;height:11.5px;background:#c6d4f8;border-radius:1px;"></div>
<div class="r" style="left:609px;top:305px;width:5px;height:1px;background:#9fb2e4;"></div>
<div class="r" style="left:609px;top:307px;width:5px;height:1px;background:#9fb2e4;"></div>
<div class="r" style="left:609px;top:309px;width:5px;height:1px;background:#9fb2e4;"></div>
<div class="r" style="left:607px;top:711.5px;width:10px;height:10.5px;background:#c6d4f8;border-radius:1px;"></div>
<svg style="left:607px;top:713px" width="10" height="9"><path d="M2 3l3 3 3-3" stroke="#4a5a98" stroke-width="1.5" fill="none"/></svg>
<div class="r" style="left:161px;top:724px;width:1px;height:13px;background:#c8c4b2;"></div>
<div class="r" style="left:277px;top:724px;width:1px;height:13px;background:#c8c4b2;"></div>
<div class="r" style="left:373px;top:724px;width:1px;height:13px;background:#c8c4b2;"></div>
<div class="r" style="left:534px;top:724px;width:1px;height:13px;background:#c8c4b2;"></div>
<div class="t" style="top:725.55px;font-size:8.5px;line-height:12px;color:#333a60;left:9.90px;">Sector 0 of 3867168</div>
<div class="t" style="top:725.05px;font-size:8.5px;line-height:12px;color:#222;left:165.90px;">Offset:</div>
<div class="t" style="top:725.05px;font-size:8.5px;line-height:12px;color:#222;right:752.00px;text-align:right;">0</div>
<div class="t" style="top:725.05px;font-size:8.5px;line-height:12px;color:#222;right:655.50px;text-align:right;">= 235</div>
<div class="t" style="top:725.05px;font-size:8.5px;line-height:12px;color:#222;left:378.30px;">Block:</div>
<div class="t" style="top:725.05px;font-size:8.5px;line-height:12px;color:#222;right:494.10px;text-align:right;">n/a</div>
<div class="t" style="top:725.05px;font-size:8.5px;line-height:12px;color:#222;left:538.70px;">Size:</div>
<div class="t" style="top:725.05px;font-size:8.5px;line-height:12px;color:#222;right:378.10px;text-align:right;">n/a</div>
<div class="r" style="left:0px;top:737px;width:656px;height:44px;background:#6474d4;"></div>
<div class="r" style="left:0px;top:741px;width:91px;height:9px;background:#6474d4;"></div>
<div class="r" style="left:91px;top:741px;width:7px;height:9px;background:#f8f8f4;"></div>
<div class="r" style="left:98px;top:741px;width:1px;height:9px;background:#b8b8b0;"></div>
<div class="r" style="left:99px;top:741px;width:4px;height:9px;background:#f8f8f4;"></div>
<div class="r" style="left:103px;top:741px;width:18px;height:9px;background:#eceae4;"></div>
<div class="r" style="left:103px;top:741px;width:18px;height:2px;background:#2a3a9a;"></div>
<svg style="left:103px;top:743px" width="18" height="7"><circle cx="4.5" cy="3.5" r="1.3" fill="#552233"/><circle cx="9" cy="3.5" r="1.3" fill="#334466"/><circle cx="13.5" cy="3.5" r="1.3" fill="#222244"/></svg>
<div class="r" style="left:0px;top:750px;width:121px;height:2px;background:#c8d0f0;"></div>
<div class="r" style="left:116px;top:752px;width:5px;height:15px;background:#ffffff;"></div>
<div class="r" style="left:121px;top:738px;width:535px;height:29px;background:#6474d4;"></div>
<div class="r" style="left:124px;top:741.5px;width:527px;height:6.5px;background:#fbfbf8;"></div>
<div class="r" style="left:124px;top:742px;width:31px;height:5px;background:#e4e4e0;"></div>
<div class="r" style="left:170px;top:741.5px;width:2px;height:6.5px;background:#505050;"></div>
<div class="r" style="left:188px;top:741.5px;width:33px;height:5.5px;background:#6c6c70;border-radius:0 0 3px 3px;"></div>
<div class="r" style="left:124px;top:748px;width:527px;height:16px;background:#ece9d8;"></div>
<div class="r" style="left:124px;top:748px;width:527px;height:1px;background:#f0d8d0;"></div>
<div class="r" style="left:124px;top:749px;width:68px;height:14px;background:#f2f0e8;"></div>
<div class="r" style="left:192px;top:749px;width:3px;height:14px;background:#d4d0c0;"></div>
<div class="r" style="left:196.4px;top:749px;width:98.99999999999997px;height:14px;background:linear-gradient(#b4c8ee,#8aa6da);border-radius:2px;"></div>
<svg style="left:127.5px;top:750px" width="11" height="11"><rect x="0.5" y="4" width="9.5" height="6.5" fill="#cfd8c8" stroke="#7a8a70" stroke-width="0.8"/><path d="M1 5l3 3 6-7" stroke="#2a9a3a" stroke-width="2" fill="none"/></svg>
<div class="t" style="top:749.75px;font-size:8.5px;line-height:12px;color:#222;letter-spacing:-0.15px;left:141.70px;">Filhämtningar</div>
<div class="t" style="top:750.21px;font-size:9.5px;line-height:12px;color:#1e2a50;letter-spacing:-0.15px;left:215.00px;">SolidWorks.2010...</div>
<div class="r" style="left:0px;top:767px;width:116px;height:6px;background:#6474d4;"></div>
<div class="r" style="left:116px;top:767px;width:102px;height:8px;background:#ffffff;"></div>
<div class="r" style="left:218px;top:764px;width:3px;height:12px;background:#6474d4;"></div>
<div class="r" style="left:221px;top:767px;width:430px;height:6px;background:#f2f0e6;"></div>
<div class="r" style="left:300px;top:767px;width:93px;height:6px;background:#8aa6da;"></div>
<div class="r" style="left:293px;top:767px;width:7px;height:6px;background:#c4cce0;"></div>
<div class="r" style="left:0px;top:773px;width:656px;height:2px;background:#aab6f0;"></div>
<div class="r" style="left:0px;top:775px;width:656px;height:1px;background:#7080d8;"></div>
<div class="r" style="left:0px;top:776px;width:656px;height:3px;background:linear-gradient(90deg,#1a3848,#22443e 50%,#1c3440);"></div>
<div class="r" style="left:0px;top:779px;width:656px;height:2px;background:#4a78c4;"></div>
<div class="r" style="left:651px;top:0px;width:373px;height:781px;background:#6474d4;"></div>
<div class="r" style="left:655.5px;top:0px;width:361.5px;height:14px;background:linear-gradient(#7896de 0px,#7d9de6 8px,#82a5ec 11px,#7a8fd2 13px,#7a8fd2 14px);"></div>
<div class="r" style="left:656px;top:14px;width:361px;height:762px;background:#ece9d8;"></div>
<div class="r" style="left:1021px;top:0px;width:3px;height:781px;background:#cfdaf2;"></div>
<div class="r" style="left:1006px;top:14px;width:11.5px;height:762px;background:#f6f5f0;"></div>
<div class="r" style="left:1007.3px;top:41px;width:10.200000000000045px;height:722px;background:linear-gradient(90deg,#b8c8f4,#c6d4fa 50%,#b4c4f0);"></div>
<div class="r" style="left:1007.3px;top:15px;width:10.200000000000045px;height:11px;background:linear-gradient(#d2defa,#bccdf4);"></div>
<div class="r" style="left:1007.3px;top:764.5px;width:10.200000000000045px;height:11.200000000000045px;background:linear-gradient(#d2defa,#bccdf4);"></div>
<svg style="left:1007px;top:15px" width="10" height="11"><path d="M2.2 7l2.8-2.8 2.8 2.8" stroke="#3c4c88" stroke-width="1.6" fill="none"/></svg>
<svg style="left:1007px;top:764.5px" width="10" height="11"><path d="M2.2 4.2l2.8 2.8 2.8-2.8" stroke="#3c4c88" stroke-width="1.6" fill="none"/></svg>
<div class="r" style="left:1010px;top:398px;width:5px;height:1px;background:#a4b6e8;"></div>
<div class="r" style="left:1010px;top:400px;width:5px;height:1px;background:#a4b6e8;"></div>
<div class="r" style="left:1010px;top:402px;width:5px;height:1px;background:#a4b6e8;"></div>
<div class="r" style="left:651px;top:775.7px;width:373px;height:5.2999999999999545px;background:linear-gradient(#9fb4f0,#5472da);"></div>
<div class="t" style="top:21.55px;font-size:8.5px;line-height:12px;color:#1a1a1a;left:662.00px;">0</div>
<div class="t" style="top:21.55px;font-size:8.5px;line-height:12px;color:#1a1a1a;left:715.30px;">Master bootstrap loader code</div>
<div class="r" style="left:852px;top:20px;width:145px;height:15px;box-sizing:border-box;border:1px solid #a9aba4;background:#ece9d8;"></div>
<div class="t" style="top:21.55px;font-size:8.5px;line-height:12px;color:#1a1a1a;left:854.70px;">EB 00 90 4D 53 44 4F 53 35 2E 30 00</div>
<div class="t" style="top:35.64px;font-size:8.5px;line-height:12px;color:#1a1a1a;left:662.00px;">440</div>
<div class="t" style="top:35.64px;font-size:8.5px;line-height:12px;color:#1a1a1a;left:715.30px;">Windows disk signature</div>
<div class="r" style="left:852px;top:34px;width:145px;height:15px;box-sizing:border-box;border:1px solid #a9aba4;background:#ffffff;"></div>
<div class="t" style="top:35.64px;font-size:8.5px;line-height:12px;color:#1a1a1a;left:854.70px;">0</div>
<div class="t" style="top:49.73px;font-size:8.5px;line-height:12px;color:#1a1a1a;left:662.00px;">440</div>
<div class="t" style="top:49.73px;font-size:8.5px;line-height:12px;color:#1a1a1a;left:715.30px;">Same reversed</div>
<div class="r" style="left:852px;top:48px;width:145px;height:15px;box-sizing:border-box;border:1px solid #a9aba4;background:#ffffff;"></div>
<div class="t" style="top:49.73px;font-size:8.5px;line-height:12px;color:#1a1a1a;left:854.70px;">0</div>
<div class="t" style="top:77.91px;font-size:8.5px;line-height:12px;color:#1a1a1a;left:662.00px;">Partition Table Entry #1</div>
<div class="t" style="top:92.00px;font-size:8.5px;line-height:12px;color:#1a1a1a;left:662.00px;">446</div>
<div class="t" style="top:92.00px;font-size:8.5px;line-height:12px;color:#1a1a1a;left:715.30px;">80 = active partition</div>
<div class="r" style="left:852px;top:91px;width:145px;height:15px;box-sizing:border-box;border:1px solid #a9aba4;background:#ffffff;"></div>
<div class="t" style="top:92.00px;font-size:8.5px;line-height:12px;color:#1a1a1a;left:854.70px;">00</div>
<div class="t" style="top:106.09px;font-size:8.5px;line-height:12px;color:#1a1a1a;left:662.00px;">447</div>
<div class="t" style="top:106.09px;font-size:8.5px;line-height:12px;color:#1a1a1a;left:715.30px;">Start head</div>
<div class="r" style="left:852px;top:105px;width:145px;height:15px;box-sizing:border-box;border:1px solid #a9aba4;background:#ffffff;"></div>
<div class="t" style="top:106.09px;font-size:8.5px;line-height:12px;color:#1a1a1a;left:854.70px;">0</div>
<div class="t" style="top:120.18px;font-size:8.5px;line-height:12px;color:#1a1a1a;left:662.00px;">448</div>
<div class="t" style="top:120.18px;font-size:8.5px;line-height:12px;color:#1a1a1a;left:715.30px;">Start sector</div>
<div class="r" style="left:852px;top:119px;width:145px;height:15px;box-sizing:border-box;border:1px solid #a9aba4;background:#ffffff;"></div>
<div class="t" style="top:120.18px;font-size:8.5px;line-height:12px;color:#1a1a1a;left:854.70px;">0</div>
<div class="t" style="top:134.27px;font-size:8.5px;line-height:12px;color:#1a1a1a;left:662.00px;">448</div>
<div class="t" style="top:134.27px;font-size:8.5px;line-height:12px;color:#1a1a1a;left:715.30px;">Start cylinder</div>
<div class="r" style="left:852px;top:133px;width:145px;height:15px;box-sizing:border-box;border:1px solid #a9aba4;background:#ffffff;"></div>
<div class="t" style="top:134.27px;font-size:8.5px;line-height:12px;color:#1a1a1a;left:854.70px;">0</div>
<div class="t" style="top:148.36px;font-size:8.5px;line-height:12px;color:#1a1a1a;left:662.00px;">450</div>
<div class="t" style="top:148.36px;font-size:8.5px;line-height:12px;color:#1a1a1a;left:715.30px;">Partition type indicator (hex)</div>
<div class="r" style="left:852px;top:147px;width:145px;height:15px;box-sizing:border-box;border:1px solid #a9aba4;background:#ffffff;"></div>
<div class="t" style="top:148.36px;font-size:8.5px;line-height:12px;color:#1a1a1a;left:854.70px;">00</div>
<div class="t" style="top:162.45px;font-size:8.5px;line-height:12px;color:#1a1a1a;left:662.00px;">451</div>
<div class="t" style="top:162.45px;font-size:8.5px;line-height:12px;color:#1a1a1a;left:715.30px;">End head</div>
<div class="r" style="left:852px;top:161px;width:145px;height:15px;box-sizing:border-box;border:1px solid #a9aba4;background:#ffffff;"></div>
<div class="t" style="top:162.45px;font-size:8.5px;line-height:12px;color:#1a1a1a;left:854.70px;">0</div>
<div class="t" style="top:176.54px;font-size:8.5px;line-height:12px;color:#1a1a1a;left:662.00px;">452</div>
<div class="t" style="top:176.54px;font-size:8.5px;line-height:12px;color:#1a1a1a;left:715.30px;">End sector</div>
<div class="r" style="left:852px;top:175px;width:145px;height:15px;box-sizing:border-box;border:1px solid #a9aba4;background:#ffffff;"></div>
<div class="t" style="top:176.54px;font-size:8.5px;line-height:12px;color:#1a1a1a;left:854.70px;">0</div>
<div class="t" style="top:190.63px;font-size:8.5px;line-height:12px;color:#1a1a1a;left:662.00px;">452</div>
<div class="t" style="top:190.63px;font-size:8.5px;line-height:12px;color:#1a1a1a;left:715.30px;">End cylinder</div>
<div class="r" style="left:852px;top:189px;width:145px;height:15px;box-sizing:border-box;border:1px solid #a9aba4;background:#ffffff;"></div>
<div class="t" style="top:190.63px;font-size:8.5px;line-height:12px;color:#1a1a1a;left:854.70px;">0</div>
<div class="t" style="top:204.72px;font-size:8.5px;line-height:12px;color:#1a1a1a;left:662.00px;">454</div>
<div class="t" style="top:204.72px;font-size:8.5px;line-height:12px;color:#1a1a1a;left:715.30px;">Sectors preceding partition 1</div>
<div class="r" style="left:852px;top:203px;width:145px;height:15px;box-sizing:border-box;border:1px solid #a9aba4;background:#ffffff;"></div>
<div class="t" style="top:204.72px;font-size:8.5px;line-height:12px;color:#1a1a1a;left:854.70px;">0</div>
<div class="t" style="top:218.81px;font-size:8.5px;line-height:12px;color:#1a1a1a;left:662.00px;">458</div>
<div class="t" style="top:218.81px;font-size:8.5px;line-height:12px;color:#1a1a1a;left:715.30px;">Sectors in partition 1</div>
<div class="r" style="left:852px;top:217px;width:145px;height:16px;box-sizing:border-box;border:1px solid #a9aba4;background:#ffffff;"></div>
<div class="t" style="top:218.81px;font-size:8.5px;line-height:12px;color:#1a1a1a;left:854.70px;">0</div>
<div class="t" style="top:246.99px;font-size:8.5px;line-height:12px;color:#1a1a1a;left:662.00px;">Partition Table Entry #2</div>
<div class="t" style="top:261.08px;font-size:8.5px;line-height:12px;color:#1a1a1a;left:662.00px;">462</div>
<div class="t" style="top:261.08px;font-size:8.5px;line-height:12px;color:#1a1a1a;left:715.30px;">80 = active partition</div>
<div class="r" style="left:852px;top:260px;width:145px;height:15px;box-sizing:border-box;border:1px solid #a9aba4;background:#ffffff;"></div>
<div class="t" style="top:261.08px;font-size:8.5px;line-height:12px;color:#1a1a1a;left:854.70px;">00</div>
<div class="t" style="top:275.17px;font-size:8.5px;line-height:12px;color:#1a1a1a;left:662.00px;">463</div>
<div class="t" style="top:275.17px;font-size:8.5px;line-height:12px;color:#1a1a1a;left:715.30px;">Start head</div>
<div class="r" style="left:852px;top:274px;width:145px;height:15px;box-sizing:border-box;border:1px solid #a9aba4;background:#ffffff;"></div>
<div class="t" style="top:275.17px;font-size:8.5px;line-height:12px;color:#1a1a1a;left:854.70px;">0</div>
<div class="t" style="top:289.26px;font-size:8.5px;line-height:12px;color:#1a1a1a;left:662.00px;">464</div>
<div class="t" style="top:289.26px;font-size:8.5px;line-height:12px;color:#1a1a1a;left:715.30px;">Start sector</div>
<div class="r" style="left:852px;top:288px;width:145px;height:15px;box-sizing:border-box;border:1px solid #a9aba4;background:#ffffff;"></div>
<div class="t" style="top:289.26px;font-size:8.5px;line-height:12px;color:#1a1a1a;left:854.70px;">0</div>
<div class="t" style="top:303.35px;font-size:8.5px;line-height:12px;color:#1a1a1a;left:662.00px;">464</div>
<div class="t" style="top:303.35px;font-size:8.5px;line-height:12px;color:#1a1a1a;left:715.30px;">Start cylinder</div>
<div class="r" style="left:852px;top:302px;width:145px;height:15px;box-sizing:border-box;border:1px solid #a9aba4;background:#ffffff;"></div>
<div class="t" style="top:303.35px;font-size:8.5px;line-height:12px;color:#1a1a1a;left:854.70px;">0</div>
<div class="t" style="top:317.44px;font-size:8.5px;line-height:12px;color:#1a1a1a;left:662.00px;">466</div>
<div class="t" style="top:317.44px;font-size:8.5px;line-height:12px;color:#1a1a1a;left:715.30px;">Partition type indicator (hex)</div>
<div class="r" style="left:852px;top:316px;width:145px;height:15px;box-sizing:border-box;border:1px solid #a9aba4;background:#ffffff;"></div>
<div class="t" style="top:317.44px;font-size:8.5px;line-height:12px;color:#1a1a1a;left:854.70px;">00</div>
<div class="t" style="top:331.53px;font-size:8.5px;line-height:12px;color:#1a1a1a;left:662.00px;">467</div>
<div class="t" style="top:331.53px;font-size:8.5px;line-height:12px;color:#1a1a1a;left:715.30px;">End head</div>
<div class="r" style="left:852px;top:330px;width:145px;height:15px;box-sizing:border-box;border:1px solid #a9aba4;background:#ffffff;"></div>
<div class="t" style="top:331.53px;font-size:8.5px;line-height:12px;color:#1a1a1a;left:854.70px;">0</div>
<div class="t" style="top:345.62px;font-size:8.5px;line-height:12px;color:#1a1a1a;left:662.00px;">468</div>
<div class="t" style="top:345.62px;font-size:8.5px;line-height:12px;color:#1a1a1a;left:715.30px;">End sector</div>
<div class="r" style="left:852px;top:344px;width:145px;height:15px;box-sizing:border-box;border:1px solid #a9aba4;background:#ffffff;"></div>
<div class="t" style="top:345.62px;font-size:8.5px;line-height:12px;color:#1a1a1a;left:854.70px;">0</div>
<div class="t" style="top:359.71px;font-size:8.5px;line-height:12px;color:#1a1a1a;left:662.00px;">468</div>
<div class="t" style="top:359.71px;font-size:8.5px;line-height:12px;color:#1a1a1a;left:715.30px;">End cylinder</div>
<div class="r" style="left:852px;top:358px;width:145px;height:15px;box-sizing:border-box;border:1px solid #a9aba4;background:#ffffff;"></div>
<div class="t" style="top:359.71px;font-size:8.5px;line-height:12px;color:#1a1a1a;left:854.70px;">0</div>
<div class="t" style="top:373.80px;font-size:8.5px;line-height:12px;color:#1a1a1a;left:662.00px;">470</div>
<div class="t" style="top:373.80px;font-size:8.5px;line-height:12px;color:#1a1a1a;left:715.30px;">Sectors preceding partition 2</div>
<div class="r" style="left:852px;top:372px;width:145px;height:16px;box-sizing:border-box;border:1px solid #a9aba4;background:#ffffff;"></div>
<div class="t" style="top:373.80px;font-size:8.5px;line-height:12px;color:#1a1a1a;left:854.70px;">0</div>
<div class="t" style="top:387.89px;font-size:8.5px;line-height:12px;color:#1a1a1a;left:662.00px;">474</div>
<div class="t" style="top:387.89px;font-size:8.5px;line-height:12px;color:#1a1a1a;left:715.30px;">Sectors in partition 2</div>
<div class="r" style="left:852px;top:387px;width:145px;height:15px;box-sizing:border-box;border:1px solid #a9aba4;background:#ffffff;"></div>
<div class="t" style="top:387.89px;font-size:8.5px;line-height:12px;color:#1a1a1a;left:854.70px;">0</div>
<div class="t" style="top:416.07px;font-size:8.5px;line-height:12px;color:#1a1a1a;left:662.00px;">Partition Table Entry #3</div>
<div class="t" style="top:430.16px;font-size:8.5px;line-height:12px;color:#1a1a1a;left:662.00px;">478</div>
<div class="t" style="top:430.16px;font-size:8.5px;line-height:12px;color:#1a1a1a;left:715.30px;">80 = active partition</div>
<div class="r" style="left:852px;top:429px;width:145px;height:15px;box-sizing:border-box;border:1px solid #a9aba4;background:#ffffff;"></div>
<div class="t" style="top:430.16px;font-size:8.5px;line-height:12px;color:#1a1a1a;left:854.70px;">00</div>
<div class="t" style="top:444.25px;font-size:8.5px;line-height:12px;color:#1a1a1a;left:662.00px;">479</div>
<div class="t" style="top:444.25px;font-size:8.5px;line-height:12px;color:#1a1a1a;left:715.30px;">Start head</div>
<div class="r" style="left:852px;top:443px;width:145px;height:15px;box-sizing:border-box;border:1px solid #a9aba4;background:#ffffff;"></div>
<div class="t" style="top:444.25px;font-size:8.5px;line-height:12px;color:#1a1a1a;left:854.70px;">0</div>
<div class="t" style="top:458.34px;font-size:8.5px;line-height:12px;color:#1a1a1a;left:662.00px;">480</div>
<div class="t" style="top:458.34px;font-size:8.5px;line-height:12px;color:#1a1a1a;left:715.30px;">Start sector</div>
<div class="r" style="left:852px;top:457px;width:145px;height:15px;box-sizing:border-box;border:1px solid #a9aba4;background:#ffffff;"></div>
<div class="t" style="top:458.34px;font-size:8.5px;line-height:12px;color:#1a1a1a;left:854.70px;">0</div>
<div class="t" style="top:472.43px;font-size:8.5px;line-height:12px;color:#1a1a1a;left:662.00px;">480</div>
<div class="t" style="top:472.43px;font-size:8.5px;line-height:12px;color:#1a1a1a;left:715.30px;">Start cylinder</div>
<div class="r" style="left:852px;top:471px;width:145px;height:15px;box-sizing:border-box;border:1px solid #a9aba4;background:#ffffff;"></div>
<div class="t" style="top:472.43px;font-size:8.5px;line-height:12px;color:#1a1a1a;left:854.70px;">0</div>
<div class="t" style="top:486.52px;font-size:8.5px;line-height:12px;color:#1a1a1a;left:662.00px;">482</div>
<div class="t" style="top:486.52px;font-size:8.5px;line-height:12px;color:#1a1a1a;left:715.30px;">Partition type indicator (hex)</div>
<div class="r" style="left:852px;top:485px;width:145px;height:15px;box-sizing:border-box;border:1px solid #a9aba4;background:#ffffff;"></div>
<div class="t" style="top:486.52px;font-size:8.5px;line-height:12px;color:#1a1a1a;left:854.70px;">00</div>
<div class="t" style="top:500.61px;font-size:8.5px;line-height:12px;color:#1a1a1a;left:662.00px;">483</div>
<div class="t" style="top:500.61px;font-size:8.5px;line-height:12px;color:#1a1a1a;left:715.30px;">End head</div>
<div class="r" style="left:852px;top:499px;width:145px;height:15px;box-sizing:border-box;border:1px solid #a9aba4;background:#ffffff;"></div>
<div class="t" style="top:500.61px;font-size:8.5px;line-height:12px;color:#1a1a1a;left:854.70px;">0</div>
<div class="t" style="top:514.70px;font-size:8.5px;line-height:12px;color:#1a1a1a;left:662.00px;">484</div>
<div class="t" style="top:514.70px;font-size:8.5px;line-height:12px;color:#1a1a1a;left:715.30px;">End sector</div>
<div class="r" style="left:852px;top:513px;width:145px;height:15px;box-sizing:border-box;border:1px solid #a9aba4;background:#ffffff;"></div>
<div class="t" style="top:514.70px;font-size:8.5px;line-height:12px;color:#1a1a1a;left:854.70px;">0</div>
<div class="t" style="top:528.79px;font-size:8.5px;line-height:12px;color:#1a1a1a;left:662.00px;">484</div>
<div class="t" style="top:528.79px;font-size:8.5px;line-height:12px;color:#1a1a1a;left:715.30px;">End cylinder</div>
<div class="r" style="left:852px;top:527px;width:145px;height:16px;box-sizing:border-box;border:1px solid #a9aba4;background:#ffffff;"></div>
<div class="t" style="top:528.79px;font-size:8.5px;line-height:12px;color:#1a1a1a;left:854.70px;">0</div>
<div class="t" style="top:542.88px;font-size:8.5px;line-height:12px;color:#1a1a1a;left:662.00px;">486</div>
<div class="t" style="top:542.88px;font-size:8.5px;line-height:12px;color:#1a1a1a;left:715.30px;">Sectors preceding partition 3</div>
<div class="r" style="left:852px;top:542px;width:145px;height:15px;box-sizing:border-box;border:1px solid #a9aba4;background:#ffffff;"></div>
<div class="t" style="top:542.88px;font-size:8.5px;line-height:12px;color:#1a1a1a;left:854.70px;">0</div>
<div class="t" style="top:556.97px;font-size:8.5px;line-height:12px;color:#1a1a1a;left:662.00px;">490</div>
<div class="t" style="top:556.97px;font-size:8.5px;line-height:12px;color:#1a1a1a;left:715.30px;">Sectors in partition 3</div>
<div class="r" style="left:852px;top:556px;width:145px;height:15px;box-sizing:border-box;border:1px solid #a9aba4;background:#ffffff;"></div>
<div class="t" style="top:556.97px;font-size:8.5px;line-height:12px;color:#1a1a1a;left:854.70px;">0</div>
<div class="t" style="top:585.15px;font-size:8.5px;line-height:12px;color:#1a1a1a;left:662.00px;">Partition Table Entry #4</div>
<div class="t" style="top:599.24px;font-size:8.5px;line-height:12px;color:#1a1a1a;left:662.00px;">494</div>
<div class="t" style="top:599.24px;font-size:8.5px;line-height:12px;color:#1a1a1a;left:715.30px;">80 = active partition</div>
<div class="r" style="left:852px;top:598px;width:145px;height:15px;box-sizing:border-box;border:1px solid #a9aba4;background:#ffffff;"></div>
<div class="t" style="top:599.24px;font-size:8.5px;line-height:12px;color:#1a1a1a;left:854.70px;">00</div>
<div class="t" style="top:613.33px;font-size:8.5px;line-height:12px;color:#1a1a1a;left:662.00px;">495</div>
<div class="t" style="top:613.33px;font-size:8.5px;line-height:12px;color:#1a1a1a;left:715.30px;">Start head</div>
<div class="r" style="left:852px;top:612px;width:145px;height:15px;box-sizing:border-box;border:1px solid #a9aba4;background:#ffffff;"></div>
<div class="t" style="top:613.33px;font-size:8.5px;line-height:12px;color:#1a1a1a;left:854.70px;">0</div>
<div class="t" style="top:627.42px;font-size:8.5px;line-height:12px;color:#1a1a1a;left:662.00px;">496</div>
<div class="t" style="top:627.42px;font-size:8.5px;line-height:12px;color:#1a1a1a;left:715.30px;">Start sector</div>
<div class="r" style="left:852px;top:626px;width:145px;height:15px;box-sizing:border-box;border:1px solid #a9aba4;background:#ffffff;"></div>
<div class="t" style="top:627.42px;font-size:8.5px;line-height:12px;color:#1a1a1a;left:854.70px;">0</div>
<div class="t" style="top:641.51px;font-size:8.5px;line-height:12px;color:#1a1a1a;left:662.00px;">496</div>
<div class="t" style="top:641.51px;font-size:8.5px;line-height:12px;color:#1a1a1a;left:715.30px;">Start cylinder</div>
<div class="r" style="left:852px;top:640px;width:145px;height:15px;box-sizing:border-box;border:1px solid #a9aba4;background:#ffffff;"></div>
<div class="t" style="top:641.51px;font-size:8.5px;line-height:12px;color:#1a1a1a;left:854.70px;">0</div>
<div class="t" style="top:655.60px;font-size:8.5px;line-height:12px;color:#1a1a1a;left:662.00px;">498</div>
<div class="t" style="top:655.60px;font-size:8.5px;line-height:12px;color:#1a1a1a;left:715.30px;">Partition type indicator (hex)</div>
<div class="r" style="left:852px;top:654px;width:145px;height:15px;box-sizing:border-box;border:1px solid #a9aba4;background:#ffffff;"></div>
<div class="t" style="top:655.60px;font-size:8.5px;line-height:12px;color:#1a1a1a;left:854.70px;">00</div>
<div class="t" style="top:669.69px;font-size:8.5px;line-height:12px;color:#1a1a1a;left:662.00px;">499</div>
<div class="t" style="top:669.69px;font-size:8.5px;line-height:12px;color:#1a1a1a;left:715.30px;">End head</div>
<div class="r" style="left:852px;top:668px;width:145px;height:15px;box-sizing:border-box;border:1px solid #a9aba4;background:#ffffff;"></div>
<div class="t" style="top:669.69px;font-size:8.5px;line-height:12px;color:#1a1a1a;left:854.70px;">0</div>
<div class="t" style="top:683.78px;font-size:8.5px;line-height:12px;color:#1a1a1a;left:662.00px;">500</div>
<div class="t" style="top:683.78px;font-size:8.5px;line-height:12px;color:#1a1a1a;left:715.30px;">End sector</div>
<div class="r" style="left:852px;top:682px;width:145px;height:16px;box-sizing:border-box;border:1px solid #a9aba4;background:#ffffff;"></div>
<div class="t" style="top:683.78px;font-size:8.5px;line-height:12px;color:#1a1a1a;left:854.70px;">0</div>
<div class="t" style="top:697.87px;font-size:8.5px;line-height:12px;color:#1a1a1a;left:662.00px;">500</div>
<div class="t" style="top:697.87px;font-size:8.5px;line-height:12px;color:#1a1a1a;left:715.30px;">End cylinder</div>
<div class="r" style="left:852px;top:697px;width:145px;height:15px;box-sizing:border-box;border:1px solid #a9aba4;background:#ffffff;"></div>
<div class="t" style="top:697.87px;font-size:8.5px;line-height:12px;color:#1a1a1a;left:854.70px;">0</div>
<div class="t" style="top:711.96px;font-size:8.5px;line-height:12px;color:#1a1a1a;left:662.00px;">502</div>
<div class="t" style="top:711.96px;font-size:8.5px;line-height:12px;color:#1a1a1a;left:715.30px;">Sectors preceding partition 4</div>
<div class="r" style="left:852px;top:711px;width:145px;height:15px;box-sizing:border-box;border:1px solid #a9aba4;background:#ffffff;"></div>
<div class="t" style="top:711.96px;font-size:8.5px;line-height:12px;color:#1a1a1a;left:854.70px;">0</div>
<div class="t" style="top:726.05px;font-size:8.5px;line-height:12px;color:#1a1a1a;left:662.00px;">506</div>
<div class="t" style="top:726.05px;font-size:8.5px;line-height:12px;color:#1a1a1a;left:715.30px;">Sectors in partition 4</div>
<div class="r" style="left:852px;top:725px;width:145px;height:15px;box-sizing:border-box;border:1px solid #a9aba4;background:#ffffff;"></div>
<div class="t" style="top:726.05px;font-size:8.5px;line-height:12px;color:#1a1a1a;left:854.70px;">0</div>
<div class="t" style="top:754.23px;font-size:8.5px;line-height:12px;color:#1a1a1a;left:662.00px;">510</div>
<div class="t" style="top:754.23px;font-size:8.5px;line-height:12px;color:#1a1a1a;left:715.30px;">Signature (55 AA)</div>
<div class="r" style="left:852px;top:753px;width:145px;height:15px;box-sizing:border-box;border:1px solid #a9aba4;background:#ece9d8;"></div>
<div class="t" style="top:754.23px;font-size:8.5px;line-height:12px;color:#1a1a1a;left:854.70px;">55 AA</div>
<svg style="left:656.6px;top:-1.5px" width="12.6" height="9.9" viewBox="0 0 14 11"><text x="0.3" y="6.8" font-family="Liberation Sans" font-weight="bold" font-size="7.2" fill="#b02898" stroke="#f0c0f0" stroke-width="0.6" letter-spacing="-0.3">HEX</text><path d="M1 9.2h3M5.5 9.2h3M10 9.2h3" stroke="#2030a0" stroke-width="1.6"/></svg>
<div class="r" style="left:1001.3px;top:-3px;width:15.3px;height:14.3px;box-sizing:border-box;border:1px solid #c0b8ec;border-radius:2px;background:#b07088;"></div>
<svg style="left:1001px;top:-3px" width="16" height="14"><path d="M4.5 3L11.5 10M11.5 3L4.5 10" stroke="#fde6f0" stroke-width="1.8"/></svg>
<div class="t" style="top:-1.49px;font-size:9.5px;line-height:12px;color:#e4ebfb;letter-spacing:0px;font-weight:bold;left:671.80px;">Master Boot Record, Base Offset: 0</div>
<!--CONTENT-->
</body></html>
